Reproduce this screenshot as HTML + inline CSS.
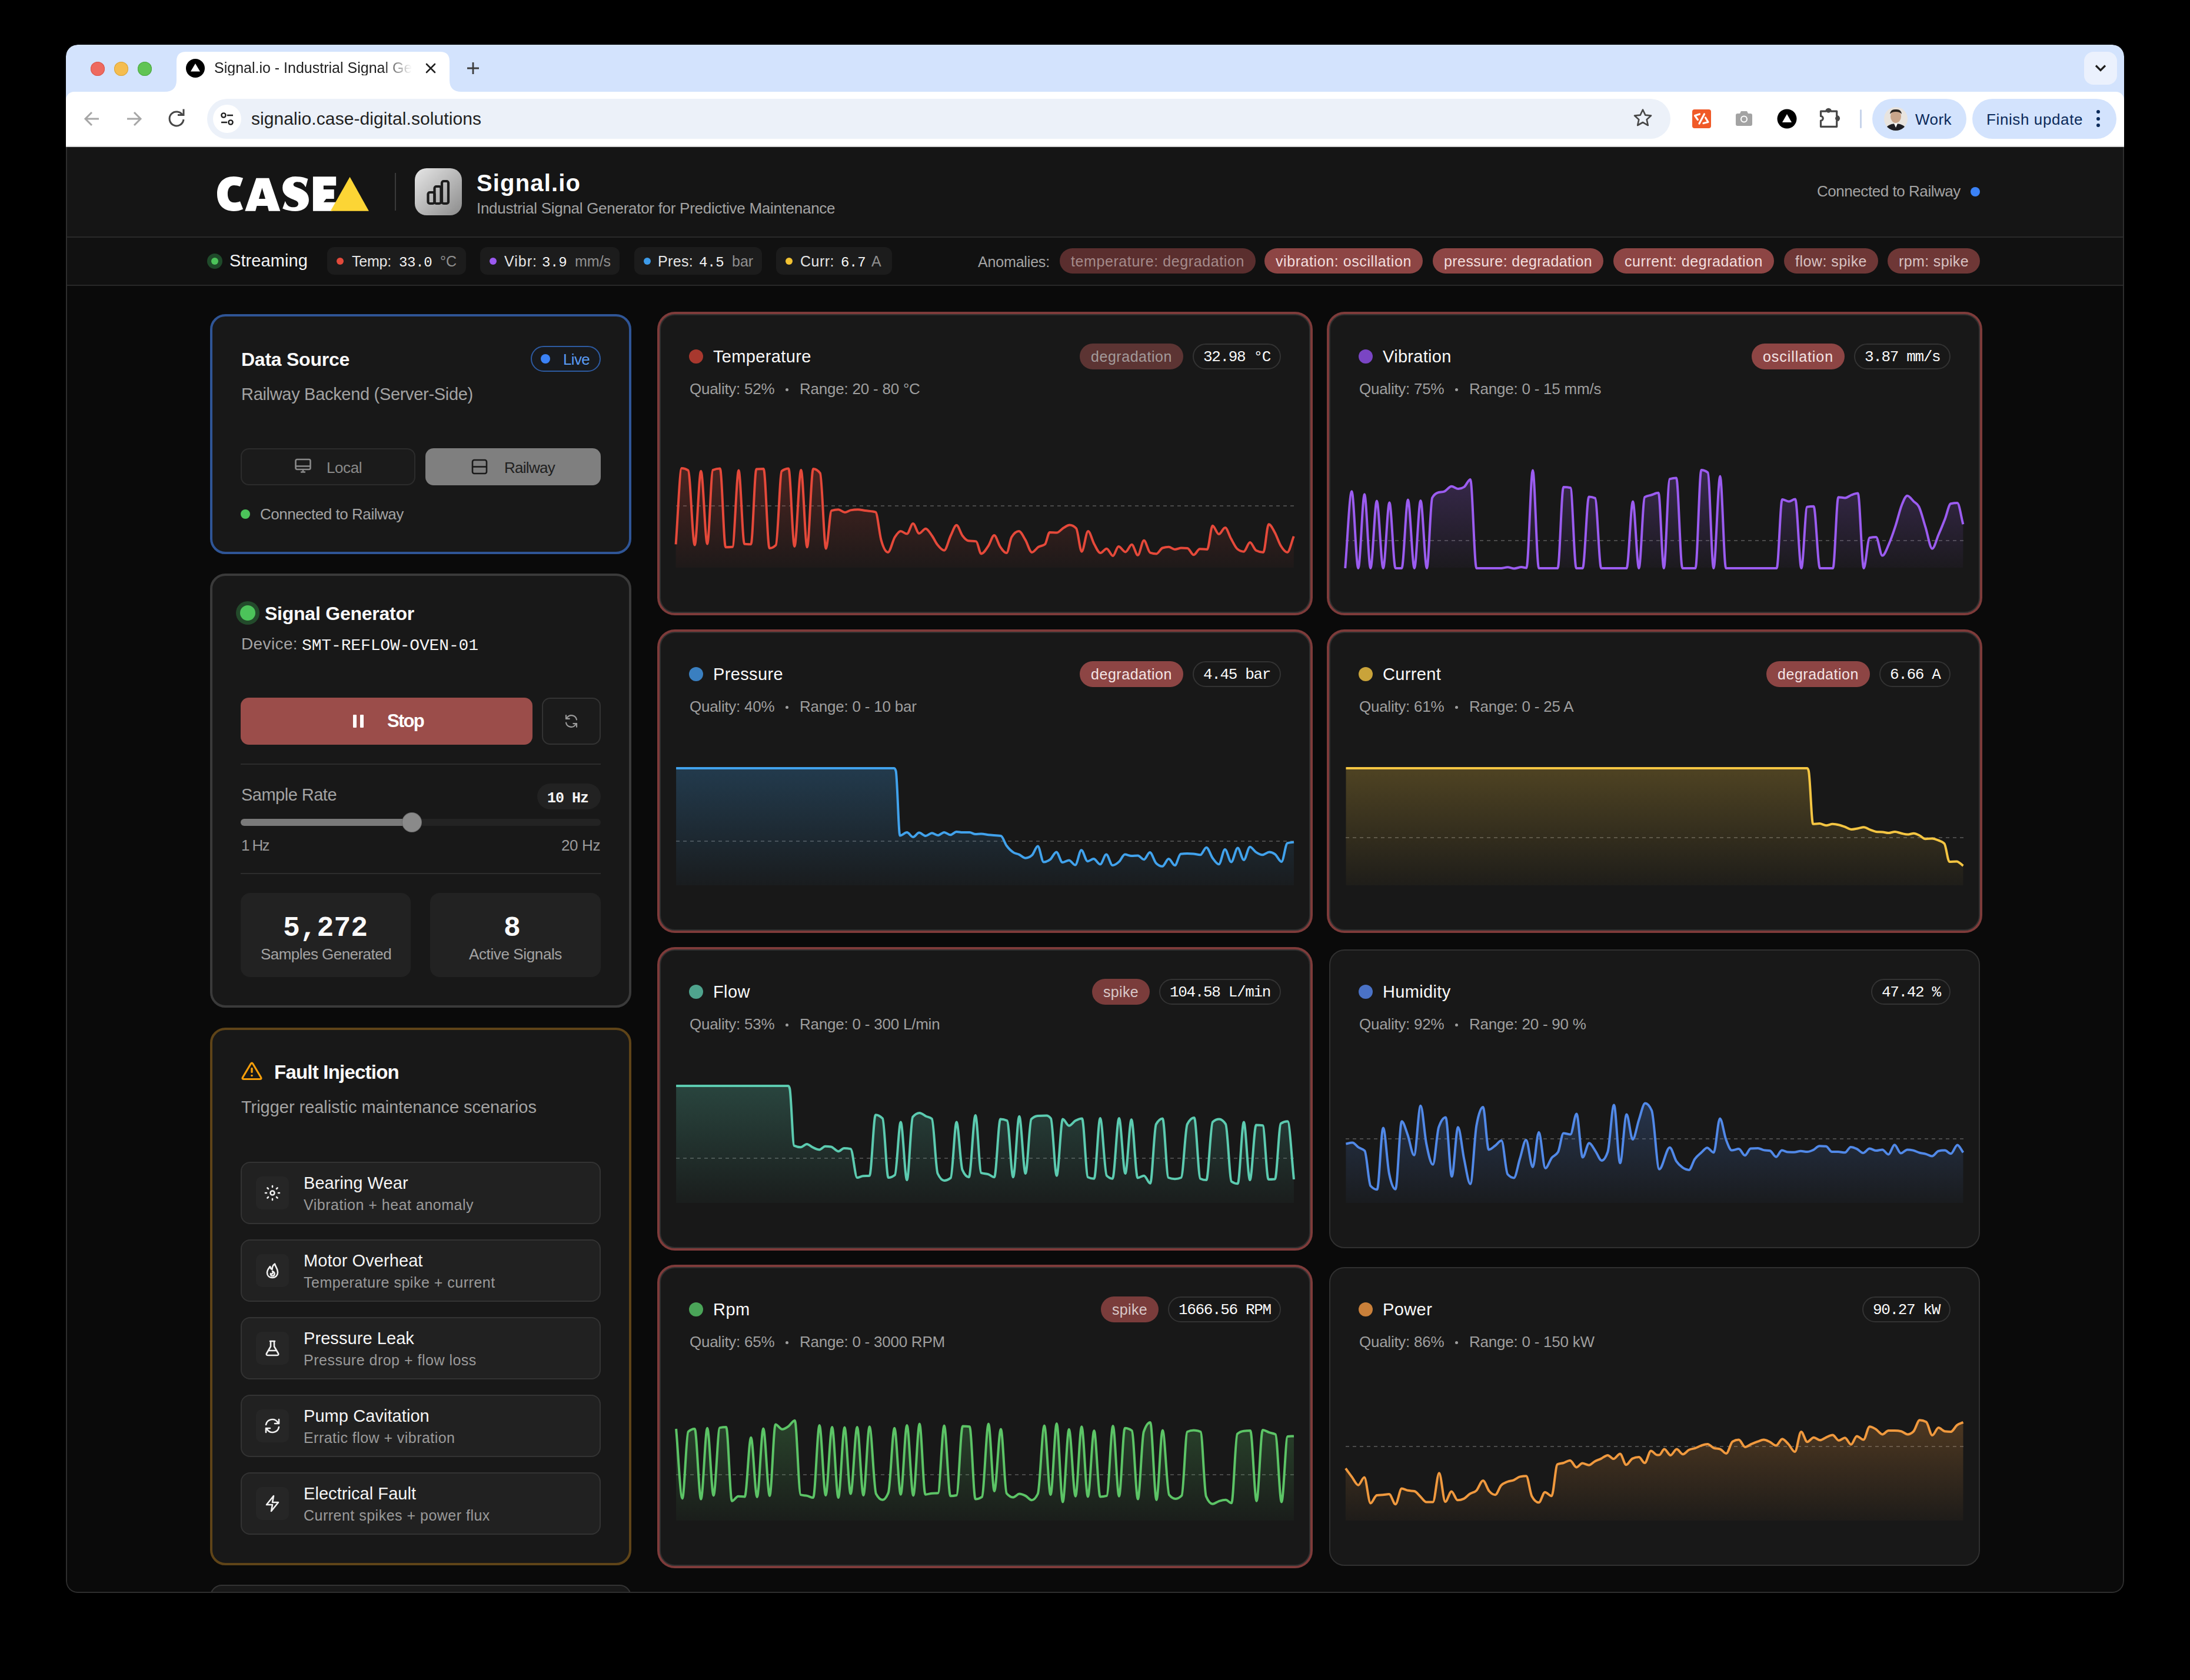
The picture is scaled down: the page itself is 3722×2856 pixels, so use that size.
<!DOCTYPE html><html><head><meta charset="utf-8"><style>html,body{margin:0;padding:0;background:#000;}body{width:3722px;height:2856px;position:relative;overflow:hidden;font-family:"Liberation Sans",sans-serif;}</style></head><body><div style='position:absolute;left:0;top:0;width:3722px;height:2856px;clip-path:inset(76px 112px 148px 112px round 20px)'><div style="position:absolute;left:112px;top:76px;width:3498px;height:2631px;border-radius:20px;overflow:hidden;background:#0a0a0a"></div>
<div style="position:absolute;left:112px;top:76px;width:3498px;height:174px;background:#d3e3fd;border-radius:20px 20px 0 0"></div>
<svg style="position:absolute;left:280px;top:88px" width="510" height="70"><path d="M0,68 Q20,68 20,48 L20,16 Q20,0 36,0 L468,0 Q484,0 484,16 L484,48 Q484,68 504,68 Z" fill="#fff"/></svg>
<div style="position:absolute;left:112px;top:156px;width:3498px;height:92px;background:#ffffff;border-radius:14px 14px 0 0"></div>
<div style="position:absolute;left:112px;top:248px;width:3498px;height:2px;background:#d9d9d9"></div>
<div style="position:absolute;left:154px;top:105px;width:24px;height:24px;border-radius:50%;background:#ee6a5f;box-shadow:inset 0 0 0 1px #d9574c"></div>
<div style="position:absolute;left:194px;top:105px;width:24px;height:24px;border-radius:50%;background:#f5bd4f;box-shadow:inset 0 0 0 1px #d9a53a"></div>
<div style="position:absolute;left:234px;top:105px;width:24px;height:24px;border-radius:50%;background:#61c454;box-shadow:inset 0 0 0 1px #4ea844"></div>
<svg style="position:absolute;left:316px;top:100px" width="32" height="32"><circle cx="16" cy="16" r="16" fill="#000"/><path d="M16,8 L24,21.5 L8,21.5 Z" fill="#fff"/></svg>
<div style="position:absolute;left:364.0px;top:102.8px;white-space:nowrap;font-family:'Liberation Sans', sans-serif;font-size:25px;line-height:25px;font-weight:400;color:#1f1f1f;letter-spacing:0.00px;-webkit-mask-image:linear-gradient(90deg,#000 85%,transparent);">Signal.io - Industrial Signal Ge</div>
<svg style="position:absolute;left:722px;top:106px" width="20" height="20"><path d="M3,3 L17,17 M17,3 L3,17" stroke="#1f1f1f" stroke-width="2.6" stroke-linecap="round"/></svg>
<svg style="position:absolute;left:792px;top:104px" width="24" height="24"><path d="M12,2 L12,22 M2,12 L22,12" stroke="#3c3c3c" stroke-width="2.8"/></svg>
<div style="position:absolute;left:3542px;top:88px;width:56px;height:56px;background:#ebf1fd;border-radius:16px"></div>
<svg style="position:absolute;left:3558px;top:106px" width="24" height="20"><path d="M4,5.5 L12,13.5 L20,5.5" stroke="#1f1f1f" stroke-width="3.2" fill="none"/></svg>
<svg style="position:absolute;left:136px;top:182px" width="40" height="40"><path d="M32,20 L9,20 M20,9 L9,20 L20,31" stroke="#a6a6a6" stroke-width="3" fill="none"/></svg>
<svg style="position:absolute;left:208px;top:182px" width="40" height="40"><path d="M8,20 L31,20 M20,9 L31,20 L20,31" stroke="#a6a6a6" stroke-width="3" fill="none"/></svg>
<svg style="position:absolute;left:280px;top:182px" width="40" height="40"><path d="M30.5,14 A12,12 0 1 0 32,21" stroke="#474747" stroke-width="3" fill="none"/><path d="M22,13.5 L32,13.5 L32,3.5" stroke="#474747" stroke-width="3" fill="none"/></svg>
<div style="position:absolute;left:352px;top:168px;width:2487px;height:68px;background:#ecf1f9;border-radius:34px"></div>
<div style="position:absolute;left:362px;top:178px;width:48px;height:48px;background:#fff;border-radius:50%"></div>
<svg style="position:absolute;left:370px;top:186px" width="32" height="32"><circle cx="10" cy="10" r="3.6" stroke="#1f1f1f" stroke-width="2.4" fill="none"/><path d="M16,10 L26,10" stroke="#1f1f1f" stroke-width="2.4"/><circle cx="22" cy="22" r="3.6" stroke="#1f1f1f" stroke-width="2.4" fill="none"/><path d="M6,22 L16,22" stroke="#1f1f1f" stroke-width="2.4"/></svg>
<div style="position:absolute;left:427.0px;top:187.1px;white-space:nowrap;font-family:'Liberation Sans', sans-serif;font-size:30px;line-height:30px;font-weight:400;color:#1f1f1f;letter-spacing:0.08px;">signalio.case-digital.solutions</div>
<svg style="position:absolute;left:2774px;top:183px" width="36" height="36"><path d="M18,3.5 L22.3,12.6 L32,13.6 L24.7,20.2 L26.8,30 L18,25 L9.2,30 L11.3,20.2 L4,13.6 L13.7,12.6 Z" stroke="#474747" stroke-width="2.6" fill="none" stroke-linejoin="round"/></svg>
<div style="position:absolute;left:2876px;top:186px;width:32px;height:32px;background:#f05a28;border-radius:4px"></div>
<svg style="position:absolute;left:2876px;top:186px" width="32" height="32"><g stroke="#fff" stroke-width="3.2" fill="none" stroke-linecap="round" stroke-linejoin="round"><path d="M12.5,8 L4.5,10.5 L9.4,17.5"/><path d="M20.5,8 L12,24"/><path d="M22.5,14 L27,21.5 L19,23.5"/></g></svg>
<svg style="position:absolute;left:2946px;top:184px" width="36" height="36"><path d="M4,12 Q4,9 7,9 L11,9 L13,5 L23,5 L25,9 L29,9 Q32,9 32,12 L32,27 Q32,30 29,30 L7,30 Q4,30 4,27 Z" fill="#a3a3a3"/><circle cx="18" cy="18.5" r="6" fill="#fff"/><circle cx="18" cy="18.5" r="4" fill="#a3a3a3"/></svg>
<svg style="position:absolute;left:3020px;top:185px" width="34" height="34"><circle cx="17" cy="17" r="16.5" fill="#000"/><path d="M17,9 L25,23 L9,23 Z" fill="#fff"/></svg>
<svg style="position:absolute;left:3088px;top:180px" width="42" height="42"><path d="M6.5,9.1 L15.8,9.1 A3.8,3.8 0 0 1 23.4,9.1 L33.7,9.1 L33.7,17.4 A3.8,3.8 0 0 1 33.7,25 L33.7,35.3 L6.5,35.3 L6.5,25 A3.8,3.8 0 0 0 6.5,17.4 Z" stroke="#474747" stroke-width="3.2" fill="none" stroke-linejoin="round"/><circle cx="19.6" cy="8.5" r="3.2" fill="#474747"/><circle cx="34.3" cy="21.2" r="3.2" fill="#474747"/></svg>
<div style="position:absolute;left:3161px;top:186px;width:3px;height:32px;background:#c7d3ea;border-radius:2px"></div>
<div style="position:absolute;left:3182px;top:168px;width:160px;height:68px;background:#d3e3fd;border-radius:34px"></div>
<svg style="position:absolute;left:3201px;top:181px" width="42" height="42"><defs><clipPath id="av"><circle cx="21" cy="21" r="20"/></clipPath></defs><g clip-path="url(#av)"><rect width="42" height="42" fill="#e8e4df"/><ellipse cx="21" cy="17" rx="9" ry="11" fill="#c9a58b"/><path d="M11,13 Q12,4 21,5 Q30,4 31,13 Q28,9 21,9 Q14,9 11,13 Z" fill="#2a2420"/><path d="M2,42 Q4,30 21,29 Q38,30 40,42 Z" fill="#1e1e24"/><path d="M18,29 L21,36 L24,29 Z" fill="#fff"/></g></svg>
<div style="position:absolute;left:3255.0px;top:190.0px;white-space:nowrap;font-family:'Liberation Sans', sans-serif;font-size:26px;line-height:26px;font-weight:400;color:#0b2a5a;letter-spacing:0.45px;">Work</div>
<div style="position:absolute;left:3352px;top:168px;width:245px;height:68px;background:#d3e3fd;border-radius:34px"></div>
<div style="position:absolute;left:3376.0px;top:190.0px;white-space:nowrap;font-family:'Liberation Sans', sans-serif;font-size:26px;line-height:26px;font-weight:400;color:#0b2a5a;letter-spacing:0.61px;">Finish update</div>
<div style="position:absolute;left:3563px;top:187px;width:6px;height:6px;background:#0b2a5a;border-radius:50%"></div>
<div style="position:absolute;left:3563px;top:198.5px;width:6px;height:6px;background:#0b2a5a;border-radius:50%"></div>
<div style="position:absolute;left:3563px;top:210px;width:6px;height:6px;background:#0b2a5a;border-radius:50%"></div>
<div style="position:absolute;left:112px;top:250px;width:3498px;height:152px;background:#151515"></div>
<div style="position:absolute;left:112px;top:402px;width:3498px;height:2px;background:#2a2a2a"></div>
<div style="position:absolute;left:112px;top:404px;width:3498px;height:80px;background:#111111"></div>
<div style="position:absolute;left:112px;top:484px;width:3498px;height:2px;background:#282828"></div>
<svg style="position:absolute;left:360px;top:290px" width="280" height="80" viewBox="0 0 2190 626"><g fill="#fff" fill-rule="evenodd"><path d="M415,100 C370,85 335,78 290,78 C150,78 70,170 70,310 C70,450 150,540 290,540 C335,540 375,530 415,512 L375,408 C350,418 325,425 295,425 C240,425 210,380 210,310 C210,240 240,195 295,195 C325,195 350,202 375,212 Z"/><path d="M440,537 L590,100 L760,100 L910,537 L757,537 L740,470 L598,470 L580,537 Z M668,228 L712,375 L625,375 Z"/><path d="M1278,110 C1220,88 1170,78 1110,78 C1005,78 940,140 940,228 C940,318 1005,352 1085,385 C1135,405 1150,418 1150,442 C1150,472 1122,488 1085,488 C1040,488 1000,475 975,405 L940,505 C990,528 1050,540 1110,540 C1220,540 1290,478 1290,390 C1290,300 1230,262 1150,230 C1100,210 1085,205 1085,185 C1085,165 1105,150 1140,150 C1180,150 1215,165 1248,222 Z"/><path d="M1345,80 L1652,80 L1652,200 L1485,200 L1485,250 L1625,250 L1625,375 L1520,375 L1485,420 L1660,420 L1600,537 L1345,537 Z"/></g><path d="M1835,85 L2088,537 L1578,537 Z" fill="#fcd535"/></svg>
<div style="position:absolute;left:671px;top:294px;width:2px;height:64px;background:#3a3a3a"></div>
<div style="position:absolute;left:705px;top:286px;width:80px;height:80px;background:linear-gradient(135deg,#e6e6e6,#8c8c8c);border-radius:20px"></div>
<svg style="position:absolute;left:705px;top:286px" width="80" height="80"><g fill="none" stroke="#1c1c1c" stroke-width="4.2" stroke-linejoin="round"><rect x="22.5" y="41" width="11" height="19" rx="3"/><rect x="33.5" y="31" width="11" height="29" rx="3"/><rect x="46" y="22" width="11" height="38" rx="3"/></g></svg>
<div style="position:absolute;left:810.0px;top:291.1px;white-space:nowrap;font-family:'Liberation Sans', sans-serif;font-size:40px;line-height:40px;font-weight:700;color:#ffffff;letter-spacing:1.15px;">Signal.io</div>
<div style="position:absolute;left:810.0px;top:341.0px;white-space:nowrap;font-family:'Liberation Sans', sans-serif;font-size:26px;line-height:26px;font-weight:400;color:#a3a3a3;letter-spacing:-0.28px;">Industrial Signal Generator for Predictive Maintenance</div>
<div style="position:absolute;left:3088.0px;top:312.0px;white-space:nowrap;font-family:'Liberation Sans', sans-serif;font-size:26px;line-height:26px;font-weight:400;color:#a3a3a3;letter-spacing:-0.45px;">Connected to Railway</div>
<div style="position:absolute;left:3349px;top:318px;width:16px;height:16px;background:#3b82f6;border-radius:50%"></div>
<div style="position:absolute;left:352px;top:431px;width:26px;height:26px;background:#1f4a2a;border-radius:50%"></div>
<div style="position:absolute;left:359px;top:438px;width:12px;height:12px;background:#4ade80;border-radius:50%;background:#4cc35a"></div>
<div style="position:absolute;left:390.0px;top:429.4px;white-space:nowrap;font-family:'Liberation Sans', sans-serif;font-size:29px;line-height:29px;font-weight:400;color:#f5f5f5;letter-spacing:0.09px;">Streaming</div>
<div style="position:absolute;left:556px;top:420px;width:236px;height:47px;background:#1c1c1c;border-radius:12px"></div>
<div style="position:absolute;left:572px;top:438px;width:12px;height:12px;background:#e24a3b;border-radius:50%"></div>
<div style="position:absolute;left:598.0px;top:431.8px;white-space:nowrap;font-family:'Liberation Sans', sans-serif;font-size:25px;line-height:25px;font-weight:400;color:#e5e5e5;letter-spacing:-0.22px;">Temp:</div>
<div style="position:absolute;left:678.0px;top:434.6px;white-space:nowrap;font-family:'Liberation Mono', monospace;font-size:24px;line-height:24px;font-weight:400;color:#f5f5f5;letter-spacing:-0.30px;">33.0</div>
<div style="position:absolute;left:748.0px;top:431.8px;white-space:nowrap;font-family:'Liberation Sans', sans-serif;font-size:25px;line-height:25px;font-weight:400;color:#8f8f8f;letter-spacing:0.00px;">°C</div>
<div style="position:absolute;left:816px;top:420px;width:237px;height:47px;background:#1c1c1c;border-radius:12px"></div>
<div style="position:absolute;left:832px;top:438px;width:12px;height:12px;background:#9b59f0;border-radius:50%"></div>
<div style="position:absolute;left:857.0px;top:431.8px;white-space:nowrap;font-family:'Liberation Sans', sans-serif;font-size:25px;line-height:25px;font-weight:400;color:#e5e5e5;letter-spacing:1.01px;">Vibr:</div>
<div style="position:absolute;left:921.0px;top:434.6px;white-space:nowrap;font-family:'Liberation Mono', monospace;font-size:24px;line-height:24px;font-weight:400;color:#f5f5f5;letter-spacing:-0.31px;">3.9</div>
<div style="position:absolute;left:977.0px;top:431.8px;white-space:nowrap;font-family:'Liberation Sans', sans-serif;font-size:25px;line-height:25px;font-weight:400;color:#8f8f8f;letter-spacing:0.00px;">mm/s</div>
<div style="position:absolute;left:1078px;top:420px;width:217px;height:47px;background:#1c1c1c;border-radius:12px"></div>
<div style="position:absolute;left:1094px;top:438px;width:12px;height:12px;background:#3d9be9;border-radius:50%"></div>
<div style="position:absolute;left:1118.0px;top:431.8px;white-space:nowrap;font-family:'Liberation Sans', sans-serif;font-size:25px;line-height:25px;font-weight:400;color:#e5e5e5;letter-spacing:0.33px;">Pres:</div>
<div style="position:absolute;left:1188.0px;top:434.6px;white-space:nowrap;font-family:'Liberation Mono', monospace;font-size:24px;line-height:24px;font-weight:400;color:#f5f5f5;letter-spacing:-0.31px;">4.5</div>
<div style="position:absolute;left:1244.0px;top:431.8px;white-space:nowrap;font-family:'Liberation Sans', sans-serif;font-size:25px;line-height:25px;font-weight:400;color:#8f8f8f;letter-spacing:0.00px;">bar</div>
<div style="position:absolute;left:1319px;top:420px;width:197px;height:47px;background:#1c1c1c;border-radius:12px"></div>
<div style="position:absolute;left:1335px;top:438px;width:12px;height:12px;background:#f2c232;border-radius:50%"></div>
<div style="position:absolute;left:1360.0px;top:431.8px;white-space:nowrap;font-family:'Liberation Sans', sans-serif;font-size:25px;line-height:25px;font-weight:400;color:#e5e5e5;letter-spacing:0.49px;">Curr:</div>
<div style="position:absolute;left:1429.0px;top:434.6px;white-space:nowrap;font-family:'Liberation Mono', monospace;font-size:24px;line-height:24px;font-weight:400;color:#f5f5f5;letter-spacing:-0.31px;">6.7</div>
<div style="position:absolute;left:1481.0px;top:431.8px;white-space:nowrap;font-family:'Liberation Sans', sans-serif;font-size:25px;line-height:25px;font-weight:400;color:#8f8f8f;letter-spacing:0.00px;">A</div>
<div style="position:absolute;left:1662.0px;top:432.8px;white-space:nowrap;font-family:'Liberation Sans', sans-serif;font-size:25px;line-height:25px;font-weight:400;color:#a3a3a3;letter-spacing:-0.17px;">Anomalies:</div>
<div style="position:absolute;left:1801px;top:422px;width:333px;height:43px;background:#5a2e2e;border-radius:22px"></div>
<div style="position:absolute;left:1820.0px;top:431.8px;white-space:nowrap;font-family:'Liberation Sans', sans-serif;font-size:25px;line-height:25px;font-weight:400;color:#a48a8a;letter-spacing:0.59px;">temperature: degradation</div>
<div style="position:absolute;left:2149px;top:422px;width:269px;height:43px;background:#8d4544;border-radius:22px"></div>
<div style="position:absolute;left:2168.0px;top:431.8px;white-space:nowrap;font-family:'Liberation Sans', sans-serif;font-size:25px;line-height:25px;font-weight:400;color:#f3dede;letter-spacing:0.58px;">vibration: oscillation</div>
<div style="position:absolute;left:2435px;top:422px;width:290px;height:43px;background:#8d4544;border-radius:22px"></div>
<div style="position:absolute;left:2454.0px;top:431.8px;white-space:nowrap;font-family:'Liberation Sans', sans-serif;font-size:25px;line-height:25px;font-weight:400;color:#f3dede;letter-spacing:0.42px;">pressure: degradation</div>
<div style="position:absolute;left:2742px;top:422px;width:273px;height:43px;background:#8d4544;border-radius:22px"></div>
<div style="position:absolute;left:2761.0px;top:431.8px;white-space:nowrap;font-family:'Liberation Sans', sans-serif;font-size:25px;line-height:25px;font-weight:400;color:#f3dede;letter-spacing:0.56px;">current: degradation</div>
<div style="position:absolute;left:3032px;top:422px;width:160px;height:43px;background:#6e3736;border-radius:22px"></div>
<div style="position:absolute;left:3051.0px;top:431.8px;white-space:nowrap;font-family:'Liberation Sans', sans-serif;font-size:25px;line-height:25px;font-weight:400;color:#d8c2c2;letter-spacing:0.48px;">flow: spike</div>
<div style="position:absolute;left:3208px;top:422px;width:157px;height:43px;background:#6e3736;border-radius:22px"></div>
<div style="position:absolute;left:3227.0px;top:431.8px;white-space:nowrap;font-family:'Liberation Sans', sans-serif;font-size:25px;line-height:25px;font-weight:400;color:#d8c2c2;letter-spacing:0.37px;">rpm: spike</div>
<div style="position:absolute;left:357px;top:534px;width:716px;height:408px;background:#181818;border:4px solid #2f5596;border-radius:26px;box-sizing:border-box"></div>
<div style="position:absolute;left:410.0px;top:594.9px;white-space:nowrap;font-family:'Liberation Sans', sans-serif;font-size:32px;line-height:32px;font-weight:700;color:#fafafa;letter-spacing:-0.25px;">Data Source</div>
<div style="position:absolute;left:902px;top:588px;width:119px;height:44px;border:2px solid #2d5aa0;border-radius:22px;box-sizing:border-box;background:#181a1d"></div>
<div style="position:absolute;left:919px;top:602px;width:16px;height:16px;background:#3b82f6;border-radius:50%"></div>
<div style="position:absolute;left:957.0px;top:598.0px;white-space:nowrap;font-family:'Liberation Sans', sans-serif;font-size:26px;line-height:26px;font-weight:400;color:#5b9cf5;letter-spacing:-0.68px;">Live</div>
<div style="position:absolute;left:410.0px;top:656.4px;white-space:nowrap;font-family:'Liberation Sans', sans-serif;font-size:29px;line-height:29px;font-weight:400;color:#a3a3a3;letter-spacing:-0.31px;">Railway Backend (Server-Side)</div>
<div style="position:absolute;left:409px;top:762px;width:297px;height:63px;background:#1b1b1b;border:2px solid #2c2c2c;border-radius:14px;box-sizing:border-box"></div>
<svg style="position:absolute;left:500px;top:778px" width="30" height="30"><g fill="none" stroke="#8a8a8a" stroke-width="2.6" stroke-linejoin="round"><rect x="2.5" y="3" width="25" height="17" rx="2.5"/><path d="M2.5,14.5 L27.5,14.5 M11,24.5 L19,24.5 M15,20 L15,24.5"/></g></svg>
<div style="position:absolute;left:555.0px;top:781.5px;white-space:nowrap;font-family:'Liberation Sans', sans-serif;font-size:26px;line-height:26px;font-weight:400;color:#8a8a8a;letter-spacing:-0.43px;">Local</div>
<div style="position:absolute;left:723px;top:762px;width:298px;height:63px;background:#7f7f7f;border-radius:14px"></div>
<svg style="position:absolute;left:800px;top:779px" width="30" height="30"><g fill="none" stroke="#1a1a1a" stroke-width="2.6" stroke-linejoin="round"><rect x="3" y="3" width="24" height="23" rx="3"/><path d="M3,14.5 L27,14.5"/></g></svg>
<div style="position:absolute;left:857.0px;top:781.5px;white-space:nowrap;font-family:'Liberation Sans', sans-serif;font-size:26px;line-height:26px;font-weight:400;color:#202020;letter-spacing:-0.72px;">Railway</div>
<div style="position:absolute;left:409px;top:866px;width:16px;height:16px;background:#4cc35a;border-radius:50%"></div>
<div style="position:absolute;left:442.0px;top:861.0px;white-space:nowrap;font-family:'Liberation Sans', sans-serif;font-size:26px;line-height:26px;font-weight:400;color:#a3a3a3;letter-spacing:-0.45px;">Connected to Railway</div>
<div style="position:absolute;left:357px;top:975px;width:716px;height:738px;background:#181818;border:4px solid #3a3a3a;border-radius:26px;box-sizing:border-box"></div>
<div style="position:absolute;left:401px;top:1022px;width:40px;height:40px;background:#234a2b;border-radius:50%"></div>
<div style="position:absolute;left:408px;top:1029px;width:26px;height:26px;background:#4cc35a;border-radius:50%"></div>
<div style="position:absolute;left:450.0px;top:1026.9px;white-space:nowrap;font-family:'Liberation Sans', sans-serif;font-size:32px;line-height:32px;font-weight:700;color:#fafafa;letter-spacing:-0.24px;">Signal Generator</div>
<div style="position:absolute;left:410.0px;top:1081.3px;white-space:nowrap;font-family:'Liberation Sans', sans-serif;font-size:28px;line-height:28px;font-weight:400;color:#a3a3a3;letter-spacing:0.38px;">Device:</div>
<div style="position:absolute;left:513.0px;top:1083.5px;white-space:nowrap;font-family:'Liberation Mono', monospace;font-size:28px;line-height:28px;font-weight:400;color:#f5f5f5;letter-spacing:-0.14px;">SMT-REFLOW-OVEN-01</div>
<div style="position:absolute;left:409px;top:1186px;width:496px;height:80px;background:#9b4d4a;border-radius:14px"></div>
<div style="position:absolute;left:600px;top:1215px;width:6px;height:22px;background:#fff;border-radius:1px"></div>
<div style="position:absolute;left:612px;top:1215px;width:6px;height:22px;background:#fff;border-radius:1px"></div>
<div style="position:absolute;left:658.0px;top:1209.8px;white-space:nowrap;font-family:'Liberation Sans', sans-serif;font-size:31px;line-height:31px;font-weight:700;color:#ffffff;letter-spacing:-1.72px;">Stop</div>
<div style="position:absolute;left:921px;top:1186px;width:100px;height:80px;border:2px solid #333;border-radius:14px;box-sizing:border-box;background:#1b1b1b"></div>
<svg style="position:absolute;left:955px;top:1210px;transform:scale(-0.82,0.82);transform-origin:16px 16px" width="32" height="32"><g fill="none" stroke="#9a9a9a" stroke-width="2.6" stroke-linecap="round" stroke-linejoin="round"><path d="M5,13 A11,11 0 0 1 25,9 L27,11"/><path d="M27,4 L27,11 L20,11"/><path d="M27,19 A11,11 0 0 1 7,23 L5,21"/><path d="M5,28 L5,21 L12,21"/></g></svg>
<div style="position:absolute;left:409px;top:1298px;width:612px;height:2px;background:#2c2c2c"></div>
<div style="position:absolute;left:410.0px;top:1337.4px;white-space:nowrap;font-family:'Liberation Sans', sans-serif;font-size:29px;line-height:29px;font-weight:400;color:#a3a3a3;letter-spacing:-0.51px;">Sample Rate</div>
<div style="position:absolute;left:913px;top:1332px;width:108px;height:44px;background:#222222;border-radius:22px"></div>
<div style="position:absolute;left:930.0px;top:1344.8px;white-space:nowrap;font-family:'Liberation Mono', monospace;font-size:25px;line-height:25px;font-weight:700;color:#f5f5f5;letter-spacing:-1.00px;">10 Hz</div>
<div style="position:absolute;left:409px;top:1392px;width:612px;height:12px;background:#232323;border-radius:6px"></div>
<div style="position:absolute;left:409px;top:1392px;width:291px;height:12px;background:#7a7a7a;border-radius:6px"></div>
<div style="position:absolute;left:684px;top:1382px;width:32px;height:32px;background:#8a8a8a;border-radius:50%;box-shadow:0 0 0 1px #6a6a6a"></div>
<div style="position:absolute;left:410.0px;top:1424.0px;white-space:nowrap;font-family:'Liberation Sans', sans-serif;font-size:26px;line-height:26px;font-weight:400;color:#9a9a9a;letter-spacing:-1.62px;">1 Hz</div>
<div style="position:absolute;left:954.0px;top:1424.0px;white-space:nowrap;font-family:'Liberation Sans', sans-serif;font-size:26px;line-height:26px;font-weight:400;color:#9a9a9a;letter-spacing:-0.38px;">20 Hz</div>
<div style="position:absolute;left:409px;top:1484px;width:612px;height:2px;background:#2c2c2c"></div>
<div style="position:absolute;left:409px;top:1518px;width:289px;height:143px;background:#222222;border-radius:16px"></div>
<div style="position:absolute;left:731px;top:1518px;width:290px;height:143px;background:#222222;border-radius:16px"></div>
<div style="position:absolute;left:481.0px;top:1554.2px;white-space:nowrap;font-family:'Liberation Mono', monospace;font-size:48px;line-height:48px;font-weight:700;color:#fafafa;letter-spacing:-0.01px;">5,272</div>
<div style="position:absolute;left:856.0px;top:1554.2px;white-space:nowrap;font-family:'Liberation Mono', monospace;font-size:48px;line-height:48px;font-weight:700;color:#fafafa;letter-spacing:-1.81px;">8</div>
<div style="position:absolute;left:443.0px;top:1609.0px;white-space:nowrap;font-family:'Liberation Sans', sans-serif;font-size:26px;line-height:26px;font-weight:400;color:#a3a3a3;letter-spacing:-0.54px;">Samples Generated</div>
<div style="position:absolute;left:797.0px;top:1609.0px;white-space:nowrap;font-family:'Liberation Sans', sans-serif;font-size:26px;line-height:26px;font-weight:400;color:#a3a3a3;letter-spacing:-0.38px;">Active Signals</div>
<div style="position:absolute;left:357px;top:1747px;width:716px;height:914px;background:#181818;border:4px solid #5f4418;border-radius:26px;box-sizing:border-box"></div>
<svg style="position:absolute;left:410px;top:1804px" width="38" height="34"><path d="M16.2,4.5 Q18,1.6 19.8,4.5 L33.5,27.5 Q35,30.5 31.5,30.5 L4.5,30.5 Q1,30.5 2.5,27.5 Z" fill="none" stroke="#f59e0b" stroke-width="3.2" stroke-linejoin="round"/><path d="M18,12.5 L18,18.5" stroke="#f59e0b" stroke-width="3.4" stroke-linecap="round"/><circle cx="18" cy="24.5" r="1.8" fill="#f59e0b"/></svg>
<div style="position:absolute;left:466.0px;top:1806.1px;white-space:nowrap;font-family:'Liberation Sans', sans-serif;font-size:33px;line-height:33px;font-weight:700;color:#fafafa;letter-spacing:-0.78px;">Fault Injection</div>
<div style="position:absolute;left:410.0px;top:1867.9px;white-space:nowrap;font-family:'Liberation Sans', sans-serif;font-size:29px;line-height:29px;font-weight:400;color:#a3a3a3;letter-spacing:-0.04px;">Trigger realistic maintenance scenarios</div>
<div style="position:absolute;left:409px;top:1975px;width:612px;height:106px;background:#212121;border:2px solid #333;border-radius:16px;box-sizing:border-box"></div>
<div style="position:absolute;left:435px;top:2000px;width:56px;height:56px;background:#262626;border-radius:10px"></div>
<svg style="position:absolute;left:447px;top:2012px" width="32" height="32"><g fill="none" stroke="#f0f0f0" stroke-width="2.6" stroke-linecap="round" stroke-linejoin="round"><circle cx="16" cy="16" r="3.5"/><path d="M16,4 L16,6 M16,26 L16,28 M4,16 L6,16 M26,16 L28,16 M7.5,7.5 L9,9 M23,23 L24.5,24.5 M7.5,24.5 L9,23 M23,9 L24.5,7.5"/></g></svg>
<div style="position:absolute;left:516.0px;top:1997.4px;white-space:nowrap;font-family:'Liberation Sans', sans-serif;font-size:29px;line-height:29px;font-weight:400;color:#f5f5f5;letter-spacing:0.07px;">Bearing Wear</div>
<div style="position:absolute;left:516.0px;top:2035.8px;white-space:nowrap;font-family:'Liberation Sans', sans-serif;font-size:25px;line-height:25px;font-weight:400;color:#9a9a9a;letter-spacing:0.51px;">Vibration + heat anomaly</div>
<div style="position:absolute;left:409px;top:2107px;width:612px;height:106px;background:#212121;border:2px solid #333;border-radius:16px;box-sizing:border-box"></div>
<div style="position:absolute;left:435px;top:2132px;width:56px;height:56px;background:#262626;border-radius:10px"></div>
<svg style="position:absolute;left:447px;top:2144px" width="32" height="32"><g fill="none" stroke="#f0f0f0" stroke-width="2.6" stroke-linecap="round" stroke-linejoin="round"><path d="M16,28 C10,28 7,24 7,19.5 C7,15 10,12 12,9 C12.5,12 14,13.5 15.5,14 C15.5,9.5 18,6 20,4.5 C20.5,9 25,12 25,19 C25,24 21.5,28 16,28 Z"/><path d="M16,25 C13.5,25 12.5,23 13,21 C14,22 15.5,22 16.5,20.5 C17,19 16.5,17.5 16,17 C19,18 20,20.5 19.5,22.5 C19,24 17.5,25 16,25 Z"/></g></svg>
<div style="position:absolute;left:516.0px;top:2129.4px;white-space:nowrap;font-family:'Liberation Sans', sans-serif;font-size:29px;line-height:29px;font-weight:400;color:#f5f5f5;letter-spacing:0.07px;">Motor Overheat</div>
<div style="position:absolute;left:516.0px;top:2167.8px;white-space:nowrap;font-family:'Liberation Sans', sans-serif;font-size:25px;line-height:25px;font-weight:400;color:#9a9a9a;letter-spacing:0.51px;">Temperature spike + current</div>
<div style="position:absolute;left:409px;top:2239px;width:612px;height:106px;background:#212121;border:2px solid #333;border-radius:16px;box-sizing:border-box"></div>
<div style="position:absolute;left:435px;top:2264px;width:56px;height:56px;background:#262626;border-radius:10px"></div>
<svg style="position:absolute;left:447px;top:2276px" width="32" height="32"><g fill="none" stroke="#f0f0f0" stroke-width="2.6" stroke-linecap="round" stroke-linejoin="round"><path d="M12,4 L20,4 M13,4 L13,13 L6,25 Q5,28 8.5,28 L23.5,28 Q27,28 26,25 L19,13 L19,4 M9,20 L23,20"/></g></svg>
<div style="position:absolute;left:516.0px;top:2261.4px;white-space:nowrap;font-family:'Liberation Sans', sans-serif;font-size:29px;line-height:29px;font-weight:400;color:#f5f5f5;letter-spacing:0.07px;">Pressure Leak</div>
<div style="position:absolute;left:516.0px;top:2299.8px;white-space:nowrap;font-family:'Liberation Sans', sans-serif;font-size:25px;line-height:25px;font-weight:400;color:#9a9a9a;letter-spacing:0.50px;">Pressure drop + flow loss</div>
<div style="position:absolute;left:409px;top:2371px;width:612px;height:106px;background:#212121;border:2px solid #333;border-radius:16px;box-sizing:border-box"></div>
<div style="position:absolute;left:435px;top:2396px;width:56px;height:56px;background:#262626;border-radius:10px"></div>
<svg style="position:absolute;left:447px;top:2408px" width="32" height="32"><g fill="none" stroke="#f0f0f0" stroke-width="2.6" stroke-linecap="round" stroke-linejoin="round"><path d="M5,14 A11,11 0 0 1 25,10 L27,12 M27,5 L27,12 L20,12 M27,18 A11,11 0 0 1 7,22 L5,20 M5,27 L5,20 L12,20"/></g></svg>
<div style="position:absolute;left:516.0px;top:2393.4px;white-space:nowrap;font-family:'Liberation Sans', sans-serif;font-size:29px;line-height:29px;font-weight:400;color:#f5f5f5;letter-spacing:0.07px;">Pump Cavitation</div>
<div style="position:absolute;left:516.0px;top:2431.8px;white-space:nowrap;font-family:'Liberation Sans', sans-serif;font-size:25px;line-height:25px;font-weight:400;color:#9a9a9a;letter-spacing:0.45px;">Erratic flow + vibration</div>
<div style="position:absolute;left:409px;top:2503px;width:612px;height:106px;background:#212121;border:2px solid #333;border-radius:16px;box-sizing:border-box"></div>
<div style="position:absolute;left:435px;top:2528px;width:56px;height:56px;background:#262626;border-radius:10px"></div>
<svg style="position:absolute;left:447px;top:2540px" width="32" height="32"><g fill="none" stroke="#f0f0f0" stroke-width="2.6" stroke-linecap="round" stroke-linejoin="round"><path d="M18,3 L6,18 L16,18 L14,29 L26,14 L16,14 Z"/></g></svg>
<div style="position:absolute;left:516.0px;top:2525.4px;white-space:nowrap;font-family:'Liberation Sans', sans-serif;font-size:29px;line-height:29px;font-weight:400;color:#f5f5f5;letter-spacing:0.06px;">Electrical Fault</div>
<div style="position:absolute;left:516.0px;top:2563.8px;white-space:nowrap;font-family:'Liberation Sans', sans-serif;font-size:25px;line-height:25px;font-weight:400;color:#9a9a9a;letter-spacing:0.49px;">Current spikes + power flux</div>
<div style="position:absolute;left:357px;top:2694px;width:716px;height:40px;background:#181818;border:2px solid #333;border-radius:26px;box-sizing:border-box"></div>
<div style="position:absolute;left:1117px;top:530px;width:1114px;height:516px;background:#7e3b3a;border-radius:30px"></div>
<div style="position:absolute;left:1121px;top:534px;width:1106px;height:508px;background:#181818;border:2px solid #303030;border-radius:26px;box-sizing:border-box"></div>
<div style="position:absolute;left:1171px;top:594px;width:24px;height:24px;background:#a8382e;border-radius:50%"></div>
<div style="position:absolute;left:1212.0px;top:592.4px;white-space:nowrap;font-family:'Liberation Sans', sans-serif;font-size:29px;line-height:29px;font-weight:400;color:#fafafa;letter-spacing:0.36px;">Temperature</div>
<div style="position:absolute;left:2027px;top:584px;width:150px;height:44px;border:2px solid #333;border-radius:22px;box-sizing:border-box"></div>
<div style="position:absolute;left:2045.0px;top:594.1px;white-space:nowrap;font-family:'Liberation Mono', monospace;font-size:26px;line-height:26px;font-weight:400;color:#fafafa;letter-spacing:-1.35px;">32.98 °C</div>
<div style="position:absolute;left:1835px;top:584px;width:176px;height:44px;background:#5c3433;border-radius:22px"></div>
<div style="position:absolute;left:1854.0px;top:593.8px;white-space:nowrap;font-family:'Liberation Sans', sans-serif;font-size:25px;line-height:25px;font-weight:400;color:#a39a9a;letter-spacing:0.54px;">degradation</div>
<div style="position:absolute;left:1172.0px;top:648.0px;white-space:nowrap;font-family:'Liberation Sans', sans-serif;font-size:26px;line-height:26px;font-weight:400;color:#9e9e9e;letter-spacing:-0.26px;">Quality: 52%</div>
<div style="position:absolute;left:1335px;top:660px;width:5px;height:5px;background:#9e9e9e;border-radius:50%"></div>
<div style="position:absolute;left:1359.0px;top:648.0px;white-space:nowrap;font-family:'Liberation Sans', sans-serif;font-size:26px;line-height:26px;font-weight:400;color:#9e9e9e;letter-spacing:-0.22px;">Range: 20 - 80 °C</div>
<svg style="position:absolute;left:0;top:0;overflow:visible" width="1" height="1"><defs><linearGradient id="g0" x1="0" y1="795.9" x2="0" y2="965" gradientUnits="userSpaceOnUse"><stop offset="0" stop-color="#e5493a" stop-opacity="0.25"/><stop offset="1" stop-color="#e5493a" stop-opacity="0.03"/></linearGradient></defs><path d="M1149,860 L2199,860" stroke="#4a4a4a" stroke-width="2.2" stroke-dasharray="6 6"/><path d="M1148.6,925.3C1151.9,882.2 1155.2,795.9 1158.5,795.9C1162.2,795.9 1165.9,797.1 1169.6,799.6C1173.3,802.1 1177.0,926.6 1180.7,926.6C1184.2,926.6 1187.8,800.8 1191.3,800.8C1194.9,800.8 1198.5,924.8 1202.1,924.8C1205.2,924.8 1208.4,800.4 1211.5,799.1C1215.6,797.4 1219.7,796.6 1223.8,796.6C1226.9,796.6 1230.1,930.3 1233.2,930.3C1237.1,930.3 1240.9,930.1 1244.8,929.8C1248.3,929.5 1251.9,799.6 1255.4,799.6C1258.7,799.6 1261.9,924.5 1265.2,924.8C1268.9,925.1 1272.6,925.3 1276.3,925.3C1279.4,925.3 1282.4,797.8 1285.5,797.6C1289.6,797.3 1293.7,797.1 1297.8,797.1C1301.1,797.1 1304.4,932.0 1307.7,932.0C1311.4,932.0 1315.0,930.2 1318.7,926.6C1322.0,923.4 1325.3,803.2 1328.6,800.8C1332.5,798.0 1336.3,796.6 1340.2,796.6C1343.6,796.6 1346.9,929.0 1350.3,929.0C1354.0,929.0 1357.7,799.1 1361.4,799.1C1364.9,799.1 1368.3,930.3 1371.8,930.3C1375.2,930.3 1378.7,797.1 1382.1,797.1C1386.0,797.1 1390.0,799.6 1393.9,804.5C1397.2,808.6 1400.5,932.7 1403.8,932.7C1406.9,932.7 1410.1,869.1 1413.2,868.1C1417.1,866.8 1420.9,866.2 1424.8,866.2C1428.5,866.2 1432.2,871.1 1435.9,871.1C1439.2,871.1 1442.4,868.0 1445.7,867.4C1449.8,866.6 1453.9,866.2 1458.0,866.2C1462.1,866.2 1466.3,867.5 1470.4,868.1C1476.3,869.0 1482.2,868.9 1488.1,870.6C1491.2,871.5 1494.4,906.7 1497.5,917.9C1501.4,931.8 1505.2,938.9 1509.1,938.9C1513.0,938.9 1517.0,919.1 1520.9,913.0C1524.2,907.9 1527.5,903.1 1530.8,903.1C1534.3,903.1 1537.9,907.6 1541.4,907.6C1544.8,907.6 1548.3,890.1 1551.7,890.1C1555.2,890.1 1558.6,906.8 1562.1,906.8C1565.8,906.8 1569.5,898.7 1573.2,898.7C1576.7,898.7 1580.3,905.6 1583.8,910.5C1587.1,915.0 1590.3,922.5 1593.6,926.6C1597.3,931.3 1601.0,935.7 1604.7,935.7C1608.4,935.7 1612.1,918.0 1615.8,910.5C1619.1,903.8 1622.4,892.8 1625.7,892.8C1629.0,892.8 1632.3,906.1 1635.6,910.5C1638.9,914.9 1642.1,918.6 1645.4,919.2C1649.9,920.0 1654.5,919.6 1659.0,920.4C1661.9,920.9 1664.7,941.4 1667.6,941.4C1671.7,941.4 1675.8,934.0 1679.9,927.8C1683.2,922.9 1686.4,910.0 1689.7,910.0C1693.0,910.0 1696.3,924.1 1699.6,929.0C1703.3,934.5 1707.0,940.1 1710.7,940.1C1713.6,940.1 1716.4,917.6 1719.3,913.0C1723.4,906.4 1727.5,903.1 1731.6,903.1C1735.3,903.1 1739.0,911.9 1742.7,917.9C1746.4,923.9 1750.1,938.9 1753.8,938.9C1757.5,938.9 1761.2,932.1 1764.9,929.8C1768.6,927.5 1772.3,928.3 1776.0,925.3C1778.6,923.2 1781.3,905.1 1783.9,905.1C1787.8,905.1 1791.8,905.6 1795.7,905.6C1799.8,905.6 1804.0,899.3 1808.1,897.0C1811.4,895.2 1814.6,892.5 1817.9,892.5C1821.6,892.5 1825.3,894.4 1829.0,898.2C1832.1,901.4 1835.3,937.7 1838.4,937.7C1842.0,937.7 1845.6,903.1 1849.2,903.1C1852.7,903.1 1856.3,919.1 1859.8,925.3C1863.3,931.4 1866.7,940.1 1870.2,940.1C1873.7,940.1 1877.3,932.7 1880.8,932.7C1884.3,932.7 1887.9,945.0 1891.4,945.0C1894.6,945.0 1897.8,929.0 1901.0,929.0C1905.0,929.0 1908.9,938.4 1912.9,938.4C1916.4,938.4 1920.0,925.8 1923.5,925.8C1926.9,925.8 1930.4,943.8 1933.8,943.8C1937.3,943.8 1940.7,918.7 1944.2,918.7C1947.7,918.7 1951.3,938.4 1954.8,939.6C1958.3,940.8 1961.9,941.4 1965.4,941.4C1968.8,941.4 1972.3,932.6 1975.7,931.5C1979.2,930.4 1982.8,929.8 1986.3,929.8C1989.8,929.8 1993.2,934.0 1996.7,934.0C2000.4,934.0 2004.1,931.5 2007.8,931.5C2011.2,931.5 2014.7,931.7 2018.1,932.0C2021.6,932.3 2025.2,943.3 2028.7,943.3C2032.2,943.3 2035.6,933.2 2039.1,933.2C2043.3,933.2 2047.5,934.0 2051.7,934.0C2054.7,934.0 2057.8,893.8 2060.8,893.8C2064.3,893.8 2067.9,908.1 2071.4,908.1C2075.0,908.1 2078.6,897.0 2082.2,897.0C2085.5,897.0 2088.8,909.7 2092.1,915.5C2095.8,922.0 2099.5,930.6 2103.2,933.5C2106.7,936.3 2110.3,937.7 2113.8,937.7C2117.3,937.7 2120.9,922.1 2124.4,922.1C2127.8,922.1 2131.3,933.9 2134.7,935.7C2138.8,937.8 2143.0,938.9 2147.1,938.9C2150.1,938.9 2153.2,891.3 2156.2,891.3C2159.7,891.3 2163.3,899.2 2166.8,905.6C2170.1,911.6 2173.4,922.3 2176.7,927.8C2180.4,933.9 2184.1,938.9 2187.8,938.9C2191.5,938.9 2195.1,920.8 2198.8,911.8L2198.8,965L1148.6,965Z" fill="url(#g0)"/><path d="M1148.6,925.3C1151.9,882.2 1155.2,795.9 1158.5,795.9C1162.2,795.9 1165.9,797.1 1169.6,799.6C1173.3,802.1 1177.0,926.6 1180.7,926.6C1184.2,926.6 1187.8,800.8 1191.3,800.8C1194.9,800.8 1198.5,924.8 1202.1,924.8C1205.2,924.8 1208.4,800.4 1211.5,799.1C1215.6,797.4 1219.7,796.6 1223.8,796.6C1226.9,796.6 1230.1,930.3 1233.2,930.3C1237.1,930.3 1240.9,930.1 1244.8,929.8C1248.3,929.5 1251.9,799.6 1255.4,799.6C1258.7,799.6 1261.9,924.5 1265.2,924.8C1268.9,925.1 1272.6,925.3 1276.3,925.3C1279.4,925.3 1282.4,797.8 1285.5,797.6C1289.6,797.3 1293.7,797.1 1297.8,797.1C1301.1,797.1 1304.4,932.0 1307.7,932.0C1311.4,932.0 1315.0,930.2 1318.7,926.6C1322.0,923.4 1325.3,803.2 1328.6,800.8C1332.5,798.0 1336.3,796.6 1340.2,796.6C1343.6,796.6 1346.9,929.0 1350.3,929.0C1354.0,929.0 1357.7,799.1 1361.4,799.1C1364.9,799.1 1368.3,930.3 1371.8,930.3C1375.2,930.3 1378.7,797.1 1382.1,797.1C1386.0,797.1 1390.0,799.6 1393.9,804.5C1397.2,808.6 1400.5,932.7 1403.8,932.7C1406.9,932.7 1410.1,869.1 1413.2,868.1C1417.1,866.8 1420.9,866.2 1424.8,866.2C1428.5,866.2 1432.2,871.1 1435.9,871.1C1439.2,871.1 1442.4,868.0 1445.7,867.4C1449.8,866.6 1453.9,866.2 1458.0,866.2C1462.1,866.2 1466.3,867.5 1470.4,868.1C1476.3,869.0 1482.2,868.9 1488.1,870.6C1491.2,871.5 1494.4,906.7 1497.5,917.9C1501.4,931.8 1505.2,938.9 1509.1,938.9C1513.0,938.9 1517.0,919.1 1520.9,913.0C1524.2,907.9 1527.5,903.1 1530.8,903.1C1534.3,903.1 1537.9,907.6 1541.4,907.6C1544.8,907.6 1548.3,890.1 1551.7,890.1C1555.2,890.1 1558.6,906.8 1562.1,906.8C1565.8,906.8 1569.5,898.7 1573.2,898.7C1576.7,898.7 1580.3,905.6 1583.8,910.5C1587.1,915.0 1590.3,922.5 1593.6,926.6C1597.3,931.3 1601.0,935.7 1604.7,935.7C1608.4,935.7 1612.1,918.0 1615.8,910.5C1619.1,903.8 1622.4,892.8 1625.7,892.8C1629.0,892.8 1632.3,906.1 1635.6,910.5C1638.9,914.9 1642.1,918.6 1645.4,919.2C1649.9,920.0 1654.5,919.6 1659.0,920.4C1661.9,920.9 1664.7,941.4 1667.6,941.4C1671.7,941.4 1675.8,934.0 1679.9,927.8C1683.2,922.9 1686.4,910.0 1689.7,910.0C1693.0,910.0 1696.3,924.1 1699.6,929.0C1703.3,934.5 1707.0,940.1 1710.7,940.1C1713.6,940.1 1716.4,917.6 1719.3,913.0C1723.4,906.4 1727.5,903.1 1731.6,903.1C1735.3,903.1 1739.0,911.9 1742.7,917.9C1746.4,923.9 1750.1,938.9 1753.8,938.9C1757.5,938.9 1761.2,932.1 1764.9,929.8C1768.6,927.5 1772.3,928.3 1776.0,925.3C1778.6,923.2 1781.3,905.1 1783.9,905.1C1787.8,905.1 1791.8,905.6 1795.7,905.6C1799.8,905.6 1804.0,899.3 1808.1,897.0C1811.4,895.2 1814.6,892.5 1817.9,892.5C1821.6,892.5 1825.3,894.4 1829.0,898.2C1832.1,901.4 1835.3,937.7 1838.4,937.7C1842.0,937.7 1845.6,903.1 1849.2,903.1C1852.7,903.1 1856.3,919.1 1859.8,925.3C1863.3,931.4 1866.7,940.1 1870.2,940.1C1873.7,940.1 1877.3,932.7 1880.8,932.7C1884.3,932.7 1887.9,945.0 1891.4,945.0C1894.6,945.0 1897.8,929.0 1901.0,929.0C1905.0,929.0 1908.9,938.4 1912.9,938.4C1916.4,938.4 1920.0,925.8 1923.5,925.8C1926.9,925.8 1930.4,943.8 1933.8,943.8C1937.3,943.8 1940.7,918.7 1944.2,918.7C1947.7,918.7 1951.3,938.4 1954.8,939.6C1958.3,940.8 1961.9,941.4 1965.4,941.4C1968.8,941.4 1972.3,932.6 1975.7,931.5C1979.2,930.4 1982.8,929.8 1986.3,929.8C1989.8,929.8 1993.2,934.0 1996.7,934.0C2000.4,934.0 2004.1,931.5 2007.8,931.5C2011.2,931.5 2014.7,931.7 2018.1,932.0C2021.6,932.3 2025.2,943.3 2028.7,943.3C2032.2,943.3 2035.6,933.2 2039.1,933.2C2043.3,933.2 2047.5,934.0 2051.7,934.0C2054.7,934.0 2057.8,893.8 2060.8,893.8C2064.3,893.8 2067.9,908.1 2071.4,908.1C2075.0,908.1 2078.6,897.0 2082.2,897.0C2085.5,897.0 2088.8,909.7 2092.1,915.5C2095.8,922.0 2099.5,930.6 2103.2,933.5C2106.7,936.3 2110.3,937.7 2113.8,937.7C2117.3,937.7 2120.9,922.1 2124.4,922.1C2127.8,922.1 2131.3,933.9 2134.7,935.7C2138.8,937.8 2143.0,938.9 2147.1,938.9C2150.1,938.9 2153.2,891.3 2156.2,891.3C2159.7,891.3 2163.3,899.2 2166.8,905.6C2170.1,911.6 2173.4,922.3 2176.7,927.8C2180.4,933.9 2184.1,938.9 2187.8,938.9C2191.5,938.9 2195.1,920.8 2198.8,911.8" fill="none" stroke="#e5493a" stroke-width="4" stroke-linejoin="round" stroke-linecap="butt"/></svg>
<div style="position:absolute;left:2255px;top:530px;width:1114px;height:516px;background:#7e3b3a;border-radius:30px"></div>
<div style="position:absolute;left:2259px;top:534px;width:1106px;height:508px;background:#181818;border:2px solid #303030;border-radius:26px;box-sizing:border-box"></div>
<div style="position:absolute;left:2309px;top:594px;width:24px;height:24px;background:#7a45c4;border-radius:50%"></div>
<div style="position:absolute;left:2350.0px;top:592.4px;white-space:nowrap;font-family:'Liberation Sans', sans-serif;font-size:29px;line-height:29px;font-weight:400;color:#fafafa;letter-spacing:0.31px;">Vibration</div>
<div style="position:absolute;left:3151px;top:584px;width:164px;height:44px;border:2px solid #333;border-radius:22px;box-sizing:border-box"></div>
<div style="position:absolute;left:3169.0px;top:594.1px;white-space:nowrap;font-family:'Liberation Mono', monospace;font-size:26px;line-height:26px;font-weight:400;color:#fafafa;letter-spacing:-1.35px;">3.87 mm/s</div>
<div style="position:absolute;left:2977px;top:584px;width:158px;height:44px;background:#8d4544;border-radius:22px"></div>
<div style="position:absolute;left:2996.0px;top:593.8px;white-space:nowrap;font-family:'Liberation Sans', sans-serif;font-size:25px;line-height:25px;font-weight:400;color:#f3e4e4;letter-spacing:0.93px;">oscillation</div>
<div style="position:absolute;left:2310.0px;top:648.0px;white-space:nowrap;font-family:'Liberation Sans', sans-serif;font-size:26px;line-height:26px;font-weight:400;color:#9e9e9e;letter-spacing:-0.26px;">Quality: 75%</div>
<div style="position:absolute;left:2473px;top:660px;width:5px;height:5px;background:#9e9e9e;border-radius:50%"></div>
<div style="position:absolute;left:2497.0px;top:648.0px;white-space:nowrap;font-family:'Liberation Sans', sans-serif;font-size:26px;line-height:26px;font-weight:400;color:#9e9e9e;letter-spacing:-0.23px;">Range: 0 - 15 mm/s</div>
<svg style="position:absolute;left:0;top:0;overflow:visible" width="1" height="1"><defs><linearGradient id="g1" x1="0" y1="799.1" x2="0" y2="965" gradientUnits="userSpaceOnUse"><stop offset="0" stop-color="#9b5cf0" stop-opacity="0.25"/><stop offset="1" stop-color="#9b5cf0" stop-opacity="0.03"/></linearGradient></defs><path d="M2287,919 L3337,919" stroke="#4a4a4a" stroke-width="2.2" stroke-dasharray="6 6"/><path d="M2286.2,966.0C2289.9,922.4 2293.6,835.3 2297.3,835.3C2301.0,835.3 2304.7,966.0 2308.4,966.0C2311.9,966.0 2315.5,840.3 2319.0,840.3C2322.4,840.3 2325.9,966.0 2329.3,966.0C2332.8,966.0 2336.4,851.4 2339.9,851.4C2343.5,851.4 2347.2,966.0 2350.8,966.0C2354.3,966.0 2357.9,854.3 2361.4,854.3C2364.8,854.3 2368.3,966.0 2371.7,966.0C2375.2,966.0 2378.8,966.0 2382.3,966.0C2385.8,966.0 2389.4,849.4 2392.9,849.4C2396.5,849.4 2400.2,966.0 2403.8,966.0C2407.3,966.0 2410.9,850.9 2414.4,850.9C2417.9,850.9 2421.5,966.0 2425.0,966.0C2428.0,966.0 2431.1,852.5 2434.1,846.4C2437.0,840.7 2439.8,839.0 2442.7,837.8C2446.8,836.1 2450.9,837.0 2455.0,835.3C2459.0,833.7 2462.9,826.7 2466.9,826.7C2470.8,826.7 2474.6,831.1 2478.5,831.1C2481.8,831.1 2485.0,830.0 2488.3,827.9C2491.8,825.6 2495.4,814.9 2498.9,814.9C2502.4,814.9 2505.8,966.0 2509.3,966.0C2523.3,966.0 2537.2,966.0 2551.2,966.0C2554.9,966.0 2558.6,964.3 2562.3,964.3C2566.0,964.3 2569.7,966.5 2573.4,966.5C2577.5,966.5 2581.6,964.0 2585.7,964.0C2588.6,964.0 2591.4,965.5 2594.3,965.5C2597.9,965.5 2601.4,799.6 2605.0,799.6C2608.4,799.6 2611.9,966.0 2615.3,966.0C2626.0,966.0 2636.7,966.0 2647.4,966.0C2650.7,966.0 2653.9,827.9 2657.2,827.9C2661.2,827.9 2665.1,828.3 2669.1,829.2C2672.4,829.9 2675.6,966.0 2678.9,966.0C2682.5,966.0 2686.2,966.0 2689.8,966.0C2693.3,966.0 2696.9,844.5 2700.4,844.5C2703.9,844.5 2707.5,845.3 2711.0,846.9C2714.4,848.5 2717.9,966.0 2721.3,966.0C2735.7,966.0 2750.1,966.0 2764.5,966.0C2768.0,966.0 2771.6,852.6 2775.1,852.6C2778.5,852.6 2782.0,966.0 2785.4,966.0C2788.7,966.0 2792.0,847.4 2795.3,845.2C2799.0,842.7 2802.7,842.7 2806.4,841.5C2810.5,840.2 2814.5,837.8 2818.6,837.8C2821.7,837.8 2824.7,966.0 2827.8,966.0C2831.1,966.0 2834.3,815.5 2837.6,814.4C2841.4,813.1 2845.2,812.4 2849.0,812.4C2852.4,812.4 2855.9,966.0 2859.3,966.0C2866.7,966.0 2874.1,966.0 2881.5,966.0C2884.8,966.0 2888.1,799.1 2891.4,799.1C2895.1,799.1 2898.8,800.5 2902.5,803.3C2905.8,805.8 2909.0,966.0 2912.3,966.0C2916.0,966.0 2919.7,809.4 2923.4,809.4C2926.7,809.4 2930.0,966.0 2933.3,966.0C2962.1,966.0 2990.8,966.0 3019.6,966.0C3022.7,966.0 3025.8,848.9 3028.9,848.9C3032.8,848.9 3036.6,852.6 3040.5,852.6C3044.0,852.6 3047.6,848.4 3051.1,848.4C3054.6,848.4 3058.0,966.0 3061.5,966.0C3064.8,966.0 3068.0,862.3 3071.3,861.7C3075.0,861.0 3078.7,860.7 3082.4,860.7C3085.9,860.7 3089.5,966.0 3093.0,966.0C3100.4,966.0 3107.8,966.0 3115.2,966.0C3118.2,966.0 3121.3,845.2 3124.3,845.2C3128.2,845.2 3132.0,846.4 3135.9,846.4C3139.4,846.4 3143.0,842.8 3146.5,841.5C3150.2,840.1 3153.9,838.5 3157.6,838.5C3160.9,838.5 3164.2,966.0 3167.5,966.0C3170.8,966.0 3174.1,914.9 3177.4,914.2C3181.1,913.4 3184.8,913.0 3188.5,913.0C3192.0,913.0 3195.6,944.6 3199.1,944.6C3202.9,944.6 3206.8,932.9 3210.6,924.1C3214.3,915.6 3218.0,904.6 3221.7,893.3C3225.2,882.7 3228.6,867.4 3232.1,858.8C3235.2,851.0 3238.4,842.7 3241.5,842.7C3245.2,842.7 3248.9,849.1 3252.6,852.6C3255.5,855.3 3258.3,855.7 3261.2,861.2C3264.9,868.3 3268.6,884.1 3272.3,895.7C3276.2,907.9 3280.0,932.7 3283.9,932.7C3287.4,932.7 3291.0,917.5 3294.5,909.3C3298.2,900.7 3301.9,891.6 3305.6,882.2C3308.9,873.9 3312.1,857.0 3315.4,856.3C3319.1,855.5 3322.8,855.1 3326.5,855.1C3329.8,855.1 3333.1,879.2 3336.4,891.3L3336.4,965L2286.2,965Z" fill="url(#g1)"/><path d="M2286.2,966.0C2289.9,922.4 2293.6,835.3 2297.3,835.3C2301.0,835.3 2304.7,966.0 2308.4,966.0C2311.9,966.0 2315.5,840.3 2319.0,840.3C2322.4,840.3 2325.9,966.0 2329.3,966.0C2332.8,966.0 2336.4,851.4 2339.9,851.4C2343.5,851.4 2347.2,966.0 2350.8,966.0C2354.3,966.0 2357.9,854.3 2361.4,854.3C2364.8,854.3 2368.3,966.0 2371.7,966.0C2375.2,966.0 2378.8,966.0 2382.3,966.0C2385.8,966.0 2389.4,849.4 2392.9,849.4C2396.5,849.4 2400.2,966.0 2403.8,966.0C2407.3,966.0 2410.9,850.9 2414.4,850.9C2417.9,850.9 2421.5,966.0 2425.0,966.0C2428.0,966.0 2431.1,852.5 2434.1,846.4C2437.0,840.7 2439.8,839.0 2442.7,837.8C2446.8,836.1 2450.9,837.0 2455.0,835.3C2459.0,833.7 2462.9,826.7 2466.9,826.7C2470.8,826.7 2474.6,831.1 2478.5,831.1C2481.8,831.1 2485.0,830.0 2488.3,827.9C2491.8,825.6 2495.4,814.9 2498.9,814.9C2502.4,814.9 2505.8,966.0 2509.3,966.0C2523.3,966.0 2537.2,966.0 2551.2,966.0C2554.9,966.0 2558.6,964.3 2562.3,964.3C2566.0,964.3 2569.7,966.5 2573.4,966.5C2577.5,966.5 2581.6,964.0 2585.7,964.0C2588.6,964.0 2591.4,965.5 2594.3,965.5C2597.9,965.5 2601.4,799.6 2605.0,799.6C2608.4,799.6 2611.9,966.0 2615.3,966.0C2626.0,966.0 2636.7,966.0 2647.4,966.0C2650.7,966.0 2653.9,827.9 2657.2,827.9C2661.2,827.9 2665.1,828.3 2669.1,829.2C2672.4,829.9 2675.6,966.0 2678.9,966.0C2682.5,966.0 2686.2,966.0 2689.8,966.0C2693.3,966.0 2696.9,844.5 2700.4,844.5C2703.9,844.5 2707.5,845.3 2711.0,846.9C2714.4,848.5 2717.9,966.0 2721.3,966.0C2735.7,966.0 2750.1,966.0 2764.5,966.0C2768.0,966.0 2771.6,852.6 2775.1,852.6C2778.5,852.6 2782.0,966.0 2785.4,966.0C2788.7,966.0 2792.0,847.4 2795.3,845.2C2799.0,842.7 2802.7,842.7 2806.4,841.5C2810.5,840.2 2814.5,837.8 2818.6,837.8C2821.7,837.8 2824.7,966.0 2827.8,966.0C2831.1,966.0 2834.3,815.5 2837.6,814.4C2841.4,813.1 2845.2,812.4 2849.0,812.4C2852.4,812.4 2855.9,966.0 2859.3,966.0C2866.7,966.0 2874.1,966.0 2881.5,966.0C2884.8,966.0 2888.1,799.1 2891.4,799.1C2895.1,799.1 2898.8,800.5 2902.5,803.3C2905.8,805.8 2909.0,966.0 2912.3,966.0C2916.0,966.0 2919.7,809.4 2923.4,809.4C2926.7,809.4 2930.0,966.0 2933.3,966.0C2962.1,966.0 2990.8,966.0 3019.6,966.0C3022.7,966.0 3025.8,848.9 3028.9,848.9C3032.8,848.9 3036.6,852.6 3040.5,852.6C3044.0,852.6 3047.6,848.4 3051.1,848.4C3054.6,848.4 3058.0,966.0 3061.5,966.0C3064.8,966.0 3068.0,862.3 3071.3,861.7C3075.0,861.0 3078.7,860.7 3082.4,860.7C3085.9,860.7 3089.5,966.0 3093.0,966.0C3100.4,966.0 3107.8,966.0 3115.2,966.0C3118.2,966.0 3121.3,845.2 3124.3,845.2C3128.2,845.2 3132.0,846.4 3135.9,846.4C3139.4,846.4 3143.0,842.8 3146.5,841.5C3150.2,840.1 3153.9,838.5 3157.6,838.5C3160.9,838.5 3164.2,966.0 3167.5,966.0C3170.8,966.0 3174.1,914.9 3177.4,914.2C3181.1,913.4 3184.8,913.0 3188.5,913.0C3192.0,913.0 3195.6,944.6 3199.1,944.6C3202.9,944.6 3206.8,932.9 3210.6,924.1C3214.3,915.6 3218.0,904.6 3221.7,893.3C3225.2,882.7 3228.6,867.4 3232.1,858.8C3235.2,851.0 3238.4,842.7 3241.5,842.7C3245.2,842.7 3248.9,849.1 3252.6,852.6C3255.5,855.3 3258.3,855.7 3261.2,861.2C3264.9,868.3 3268.6,884.1 3272.3,895.7C3276.2,907.9 3280.0,932.7 3283.9,932.7C3287.4,932.7 3291.0,917.5 3294.5,909.3C3298.2,900.7 3301.9,891.6 3305.6,882.2C3308.9,873.9 3312.1,857.0 3315.4,856.3C3319.1,855.5 3322.8,855.1 3326.5,855.1C3329.8,855.1 3333.1,879.2 3336.4,891.3" fill="none" stroke="#9b5cf0" stroke-width="4" stroke-linejoin="round" stroke-linecap="butt"/></svg>
<div style="position:absolute;left:1117px;top:1070px;width:1114px;height:516px;background:#7e3b3a;border-radius:30px"></div>
<div style="position:absolute;left:1121px;top:1074px;width:1106px;height:508px;background:#181818;border:2px solid #303030;border-radius:26px;box-sizing:border-box"></div>
<div style="position:absolute;left:1171px;top:1134px;width:24px;height:24px;background:#3a7fc0;border-radius:50%"></div>
<div style="position:absolute;left:1212.0px;top:1132.4px;white-space:nowrap;font-family:'Liberation Sans', sans-serif;font-size:29px;line-height:29px;font-weight:400;color:#fafafa;letter-spacing:0.36px;">Pressure</div>
<div style="position:absolute;left:2027px;top:1124px;width:150px;height:44px;border:2px solid #333;border-radius:22px;box-sizing:border-box"></div>
<div style="position:absolute;left:2045.0px;top:1134.1px;white-space:nowrap;font-family:'Liberation Mono', monospace;font-size:26px;line-height:26px;font-weight:400;color:#fafafa;letter-spacing:-1.35px;">4.45 bar</div>
<div style="position:absolute;left:1835px;top:1124px;width:176px;height:44px;background:#8d4544;border-radius:22px"></div>
<div style="position:absolute;left:1854.0px;top:1133.8px;white-space:nowrap;font-family:'Liberation Sans', sans-serif;font-size:25px;line-height:25px;font-weight:400;color:#f3e4e4;letter-spacing:0.54px;">degradation</div>
<div style="position:absolute;left:1172.0px;top:1188.0px;white-space:nowrap;font-family:'Liberation Sans', sans-serif;font-size:26px;line-height:26px;font-weight:400;color:#9e9e9e;letter-spacing:-0.26px;">Quality: 40%</div>
<div style="position:absolute;left:1335px;top:1200px;width:5px;height:5px;background:#9e9e9e;border-radius:50%"></div>
<div style="position:absolute;left:1359.0px;top:1188.0px;white-space:nowrap;font-family:'Liberation Sans', sans-serif;font-size:26px;line-height:26px;font-weight:400;color:#9e9e9e;letter-spacing:-0.21px;">Range: 0 - 10 bar</div>
<svg style="position:absolute;left:0;top:0;overflow:visible" width="1" height="1"><defs><linearGradient id="g2" x1="0" y1="1305.9" x2="0" y2="1505" gradientUnits="userSpaceOnUse"><stop offset="0" stop-color="#41a2ec" stop-opacity="0.25"/><stop offset="1" stop-color="#41a2ec" stop-opacity="0.03"/></linearGradient></defs><path d="M1149,1430 L2199,1430" stroke="#4a4a4a" stroke-width="2.2" stroke-dasharray="6 6"/><path d="M1149.1,1305.9C1272.6,1305.9 1396.2,1305.9 1519.7,1305.9C1520.7,1305.9 1521.6,1307.5 1522.6,1310.8C1524.9,1318.6 1527.2,1420.5 1529.5,1420.5C1533.5,1420.5 1537.4,1415.1 1541.4,1415.1C1544.8,1415.1 1548.3,1423.0 1551.7,1423.0C1555.2,1423.0 1558.6,1415.6 1562.1,1415.6C1565.8,1415.6 1569.5,1421.0 1573.2,1421.0C1576.7,1421.0 1580.3,1416.3 1583.8,1416.3C1587.3,1416.3 1590.9,1420.0 1594.4,1420.0C1597.8,1420.0 1601.3,1414.9 1604.7,1414.9C1608.2,1414.9 1611.8,1419.3 1615.3,1419.3C1618.8,1419.3 1622.2,1413.9 1625.7,1413.9C1629.0,1413.9 1632.3,1415.1 1635.6,1415.1C1639.7,1415.1 1643.8,1415.1 1647.9,1415.1C1651.2,1415.1 1654.5,1418.1 1657.8,1418.1C1661.1,1418.1 1664.3,1417.6 1667.6,1417.6C1671.7,1417.6 1675.9,1418.8 1680.0,1419.3C1687.0,1420.1 1694.0,1419.9 1701.0,1421.0C1704.3,1421.5 1707.5,1433.3 1710.8,1437.8C1714.9,1443.5 1719.0,1447.1 1723.1,1449.6C1726.0,1451.3 1728.9,1451.3 1731.8,1452.6C1735.5,1454.2 1739.2,1458.7 1742.9,1458.7C1746.6,1458.7 1750.3,1457.1 1754.0,1453.8C1757.3,1450.9 1760.5,1438.5 1763.8,1438.5C1767.1,1438.5 1770.4,1465.4 1773.7,1465.4C1777.4,1465.4 1781.1,1464.0 1784.8,1461.2C1788.3,1458.5 1791.9,1448.4 1795.4,1448.4C1798.8,1448.4 1802.3,1466.1 1805.7,1466.1C1809.4,1466.1 1813.1,1462.4 1816.8,1462.4C1820.3,1462.4 1823.9,1470.6 1827.4,1470.6C1830.9,1470.6 1834.3,1445.2 1837.8,1445.2C1841.3,1445.2 1844.9,1464.2 1848.4,1464.2C1851.8,1464.2 1855.3,1460.0 1858.7,1460.0C1862.4,1460.0 1866.1,1469.3 1869.8,1469.3C1873.3,1469.3 1876.7,1452.6 1880.2,1452.6C1883.7,1452.6 1887.3,1471.1 1890.8,1471.1C1894.5,1471.1 1898.2,1468.3 1901.9,1464.9C1905.2,1461.9 1908.5,1452.6 1911.8,1452.6C1915.5,1452.6 1919.2,1455.0 1922.9,1455.0C1926.6,1455.0 1930.2,1454.6 1933.9,1454.6C1937.4,1454.6 1940.8,1461.2 1944.3,1461.2C1947.6,1461.2 1950.9,1448.9 1954.2,1448.9C1957.7,1448.9 1961.3,1463.8 1964.8,1467.4C1968.3,1471.0 1971.9,1472.8 1975.4,1472.8C1979.0,1472.8 1982.6,1460.0 1986.2,1460.0C1989.7,1460.0 1993.3,1471.1 1996.8,1471.1C2000.1,1471.1 2003.4,1452.3 2006.7,1451.8C2010.4,1451.2 2014.1,1450.9 2017.8,1450.9C2021.2,1450.9 2024.7,1451.1 2028.1,1451.4C2032.1,1451.8 2036.0,1453.3 2040.0,1453.3C2043.4,1453.3 2046.9,1440.7 2050.3,1440.7C2053.8,1440.7 2057.4,1453.9 2060.9,1458.7C2064.4,1463.5 2068.0,1469.3 2071.5,1469.3C2075.0,1469.3 2078.4,1444.0 2081.9,1444.0C2085.4,1444.0 2089.0,1465.4 2092.5,1465.4C2096.2,1465.4 2099.9,1441.5 2103.6,1441.5C2107.0,1441.5 2110.5,1462.0 2113.9,1462.0C2117.4,1462.0 2120.8,1439.8 2124.3,1439.8C2127.8,1439.8 2131.4,1446.7 2134.9,1448.9C2138.4,1451.2 2142.0,1453.3 2145.5,1453.3C2149.4,1453.3 2153.2,1448.4 2157.1,1448.4C2160.4,1448.4 2163.6,1449.7 2166.9,1452.1C2170.6,1454.8 2174.3,1464.9 2178.0,1464.9C2181.3,1464.9 2184.6,1434.5 2187.9,1433.4C2191.6,1432.2 2195.3,1432.2 2199.0,1431.6L2199.0,1505L1149.1,1505Z" fill="url(#g2)"/><path d="M1149.1,1305.9C1272.6,1305.9 1396.2,1305.9 1519.7,1305.9C1520.7,1305.9 1521.6,1307.5 1522.6,1310.8C1524.9,1318.6 1527.2,1420.5 1529.5,1420.5C1533.5,1420.5 1537.4,1415.1 1541.4,1415.1C1544.8,1415.1 1548.3,1423.0 1551.7,1423.0C1555.2,1423.0 1558.6,1415.6 1562.1,1415.6C1565.8,1415.6 1569.5,1421.0 1573.2,1421.0C1576.7,1421.0 1580.3,1416.3 1583.8,1416.3C1587.3,1416.3 1590.9,1420.0 1594.4,1420.0C1597.8,1420.0 1601.3,1414.9 1604.7,1414.9C1608.2,1414.9 1611.8,1419.3 1615.3,1419.3C1618.8,1419.3 1622.2,1413.9 1625.7,1413.9C1629.0,1413.9 1632.3,1415.1 1635.6,1415.1C1639.7,1415.1 1643.8,1415.1 1647.9,1415.1C1651.2,1415.1 1654.5,1418.1 1657.8,1418.1C1661.1,1418.1 1664.3,1417.6 1667.6,1417.6C1671.7,1417.6 1675.9,1418.8 1680.0,1419.3C1687.0,1420.1 1694.0,1419.9 1701.0,1421.0C1704.3,1421.5 1707.5,1433.3 1710.8,1437.8C1714.9,1443.5 1719.0,1447.1 1723.1,1449.6C1726.0,1451.3 1728.9,1451.3 1731.8,1452.6C1735.5,1454.2 1739.2,1458.7 1742.9,1458.7C1746.6,1458.7 1750.3,1457.1 1754.0,1453.8C1757.3,1450.9 1760.5,1438.5 1763.8,1438.5C1767.1,1438.5 1770.4,1465.4 1773.7,1465.4C1777.4,1465.4 1781.1,1464.0 1784.8,1461.2C1788.3,1458.5 1791.9,1448.4 1795.4,1448.4C1798.8,1448.4 1802.3,1466.1 1805.7,1466.1C1809.4,1466.1 1813.1,1462.4 1816.8,1462.4C1820.3,1462.4 1823.9,1470.6 1827.4,1470.6C1830.9,1470.6 1834.3,1445.2 1837.8,1445.2C1841.3,1445.2 1844.9,1464.2 1848.4,1464.2C1851.8,1464.2 1855.3,1460.0 1858.7,1460.0C1862.4,1460.0 1866.1,1469.3 1869.8,1469.3C1873.3,1469.3 1876.7,1452.6 1880.2,1452.6C1883.7,1452.6 1887.3,1471.1 1890.8,1471.1C1894.5,1471.1 1898.2,1468.3 1901.9,1464.9C1905.2,1461.9 1908.5,1452.6 1911.8,1452.6C1915.5,1452.6 1919.2,1455.0 1922.9,1455.0C1926.6,1455.0 1930.2,1454.6 1933.9,1454.6C1937.4,1454.6 1940.8,1461.2 1944.3,1461.2C1947.6,1461.2 1950.9,1448.9 1954.2,1448.9C1957.7,1448.9 1961.3,1463.8 1964.8,1467.4C1968.3,1471.0 1971.9,1472.8 1975.4,1472.8C1979.0,1472.8 1982.6,1460.0 1986.2,1460.0C1989.7,1460.0 1993.3,1471.1 1996.8,1471.1C2000.1,1471.1 2003.4,1452.3 2006.7,1451.8C2010.4,1451.2 2014.1,1450.9 2017.8,1450.9C2021.2,1450.9 2024.7,1451.1 2028.1,1451.4C2032.1,1451.8 2036.0,1453.3 2040.0,1453.3C2043.4,1453.3 2046.9,1440.7 2050.3,1440.7C2053.8,1440.7 2057.4,1453.9 2060.9,1458.7C2064.4,1463.5 2068.0,1469.3 2071.5,1469.3C2075.0,1469.3 2078.4,1444.0 2081.9,1444.0C2085.4,1444.0 2089.0,1465.4 2092.5,1465.4C2096.2,1465.4 2099.9,1441.5 2103.6,1441.5C2107.0,1441.5 2110.5,1462.0 2113.9,1462.0C2117.4,1462.0 2120.8,1439.8 2124.3,1439.8C2127.8,1439.8 2131.4,1446.7 2134.9,1448.9C2138.4,1451.2 2142.0,1453.3 2145.5,1453.3C2149.4,1453.3 2153.2,1448.4 2157.1,1448.4C2160.4,1448.4 2163.6,1449.7 2166.9,1452.1C2170.6,1454.8 2174.3,1464.9 2178.0,1464.9C2181.3,1464.9 2184.6,1434.5 2187.9,1433.4C2191.6,1432.2 2195.3,1432.2 2199.0,1431.6" fill="none" stroke="#41a2ec" stroke-width="4" stroke-linejoin="round" stroke-linecap="butt"/></svg>
<div style="position:absolute;left:2255px;top:1070px;width:1114px;height:516px;background:#7e3b3a;border-radius:30px"></div>
<div style="position:absolute;left:2259px;top:1074px;width:1106px;height:508px;background:#181818;border:2px solid #303030;border-radius:26px;box-sizing:border-box"></div>
<div style="position:absolute;left:2309px;top:1134px;width:24px;height:24px;background:#c9a33a;border-radius:50%"></div>
<div style="position:absolute;left:2350.0px;top:1132.4px;white-space:nowrap;font-family:'Liberation Sans', sans-serif;font-size:29px;line-height:29px;font-weight:400;color:#fafafa;letter-spacing:0.34px;">Current</div>
<div style="position:absolute;left:3194px;top:1124px;width:121px;height:44px;border:2px solid #333;border-radius:22px;box-sizing:border-box"></div>
<div style="position:absolute;left:3212.0px;top:1134.1px;white-space:nowrap;font-family:'Liberation Mono', monospace;font-size:26px;line-height:26px;font-weight:400;color:#fafafa;letter-spacing:-1.35px;">6.66 A</div>
<div style="position:absolute;left:3002px;top:1124px;width:176px;height:44px;background:#8d4544;border-radius:22px"></div>
<div style="position:absolute;left:3021.0px;top:1133.8px;white-space:nowrap;font-family:'Liberation Sans', sans-serif;font-size:25px;line-height:25px;font-weight:400;color:#f3e4e4;letter-spacing:0.54px;">degradation</div>
<div style="position:absolute;left:2310.0px;top:1188.0px;white-space:nowrap;font-family:'Liberation Sans', sans-serif;font-size:26px;line-height:26px;font-weight:400;color:#9e9e9e;letter-spacing:-0.26px;">Quality: 61%</div>
<div style="position:absolute;left:2473px;top:1200px;width:5px;height:5px;background:#9e9e9e;border-radius:50%"></div>
<div style="position:absolute;left:2497.0px;top:1188.0px;white-space:nowrap;font-family:'Liberation Sans', sans-serif;font-size:26px;line-height:26px;font-weight:400;color:#9e9e9e;letter-spacing:-0.22px;">Range: 0 - 25 A</div>
<svg style="position:absolute;left:0;top:0;overflow:visible" width="1" height="1"><defs><linearGradient id="g3" x1="0" y1="1305.9" x2="0" y2="1505" gradientUnits="userSpaceOnUse"><stop offset="0" stop-color="#f4c542" stop-opacity="0.25"/><stop offset="1" stop-color="#f4c542" stop-opacity="0.03"/></linearGradient></defs><path d="M2287,1424 L3337,1424" stroke="#4a4a4a" stroke-width="2.2" stroke-dasharray="6 6"/><path d="M2287.5,1305.9C2548.8,1305.9 2810.2,1305.9 3071.5,1305.9C3072.3,1305.9 3073.1,1307.5 3073.9,1310.8C3076.4,1320.9 3078.8,1400.8 3081.3,1400.8C3085.0,1400.8 3088.7,1400.1 3092.4,1400.1C3096.1,1400.1 3099.8,1403.3 3103.5,1403.3C3107.2,1403.3 3110.9,1400.8 3114.6,1400.8C3118.3,1400.8 3122.0,1401.6 3125.7,1402.5C3129.0,1403.3 3132.3,1404.5 3135.6,1405.7C3139.3,1407.0 3143.0,1409.9 3146.7,1409.9C3150.4,1409.9 3154.1,1408.9 3157.8,1408.2C3161.1,1407.6 3164.3,1406.2 3167.6,1406.2C3171.3,1406.2 3175.0,1409.4 3178.7,1410.7C3182.0,1411.9 3185.3,1413.6 3188.6,1413.9C3192.3,1414.2 3196.0,1414.1 3199.7,1414.4C3203.0,1414.7 3206.2,1416.1 3209.5,1416.1C3213.2,1416.1 3216.9,1413.9 3220.6,1413.9C3224.3,1413.9 3228.0,1416.0 3231.7,1416.8C3235.0,1417.5 3238.3,1418.6 3241.6,1418.6C3245.3,1418.6 3249.0,1416.8 3252.7,1416.8C3256.0,1416.8 3259.3,1418.9 3262.6,1420.5C3265.9,1422.1 3269.1,1426.2 3272.4,1426.2C3276.1,1426.2 3279.8,1425.5 3283.5,1425.5C3287.2,1425.5 3290.9,1427.1 3294.6,1428.7C3297.9,1430.1 3301.2,1430.5 3304.5,1434.1C3307.4,1437.2 3310.2,1464.9 3313.1,1464.9C3317.2,1464.9 3321.3,1464.4 3325.4,1464.4C3329.1,1464.4 3332.8,1469.3 3336.5,1471.8L3336.5,1505L2287.5,1505Z" fill="url(#g3)"/><path d="M2287.5,1305.9C2548.8,1305.9 2810.2,1305.9 3071.5,1305.9C3072.3,1305.9 3073.1,1307.5 3073.9,1310.8C3076.4,1320.9 3078.8,1400.8 3081.3,1400.8C3085.0,1400.8 3088.7,1400.1 3092.4,1400.1C3096.1,1400.1 3099.8,1403.3 3103.5,1403.3C3107.2,1403.3 3110.9,1400.8 3114.6,1400.8C3118.3,1400.8 3122.0,1401.6 3125.7,1402.5C3129.0,1403.3 3132.3,1404.5 3135.6,1405.7C3139.3,1407.0 3143.0,1409.9 3146.7,1409.9C3150.4,1409.9 3154.1,1408.9 3157.8,1408.2C3161.1,1407.6 3164.3,1406.2 3167.6,1406.2C3171.3,1406.2 3175.0,1409.4 3178.7,1410.7C3182.0,1411.9 3185.3,1413.6 3188.6,1413.9C3192.3,1414.2 3196.0,1414.1 3199.7,1414.4C3203.0,1414.7 3206.2,1416.1 3209.5,1416.1C3213.2,1416.1 3216.9,1413.9 3220.6,1413.9C3224.3,1413.9 3228.0,1416.0 3231.7,1416.8C3235.0,1417.5 3238.3,1418.6 3241.6,1418.6C3245.3,1418.6 3249.0,1416.8 3252.7,1416.8C3256.0,1416.8 3259.3,1418.9 3262.6,1420.5C3265.9,1422.1 3269.1,1426.2 3272.4,1426.2C3276.1,1426.2 3279.8,1425.5 3283.5,1425.5C3287.2,1425.5 3290.9,1427.1 3294.6,1428.7C3297.9,1430.1 3301.2,1430.5 3304.5,1434.1C3307.4,1437.2 3310.2,1464.9 3313.1,1464.9C3317.2,1464.9 3321.3,1464.4 3325.4,1464.4C3329.1,1464.4 3332.8,1469.3 3336.5,1471.8" fill="none" stroke="#f4c542" stroke-width="4" stroke-linejoin="round" stroke-linecap="butt"/></svg>
<div style="position:absolute;left:1117px;top:1610px;width:1114px;height:516px;background:#7e3b3a;border-radius:30px"></div>
<div style="position:absolute;left:1121px;top:1614px;width:1106px;height:508px;background:#181818;border:2px solid #303030;border-radius:26px;box-sizing:border-box"></div>
<div style="position:absolute;left:1171px;top:1674px;width:24px;height:24px;background:#4fa38d;border-radius:50%"></div>
<div style="position:absolute;left:1212.0px;top:1672.4px;white-space:nowrap;font-family:'Liberation Sans', sans-serif;font-size:29px;line-height:29px;font-weight:400;color:#fafafa;letter-spacing:0.38px;">Flow</div>
<div style="position:absolute;left:1970px;top:1664px;width:207px;height:44px;border:2px solid #333;border-radius:22px;box-sizing:border-box"></div>
<div style="position:absolute;left:1988.0px;top:1674.1px;white-space:nowrap;font-family:'Liberation Mono', monospace;font-size:26px;line-height:26px;font-weight:400;color:#fafafa;letter-spacing:-1.35px;">104.58 L/min</div>
<div style="position:absolute;left:1856px;top:1664px;width:98px;height:44px;background:#7a3c3b;border-radius:22px"></div>
<div style="position:absolute;left:1875.0px;top:1673.8px;white-space:nowrap;font-family:'Liberation Sans', sans-serif;font-size:25px;line-height:25px;font-weight:400;color:#d9c9c9;letter-spacing:0.33px;">spike</div>
<div style="position:absolute;left:1172.0px;top:1728.0px;white-space:nowrap;font-family:'Liberation Sans', sans-serif;font-size:26px;line-height:26px;font-weight:400;color:#9e9e9e;letter-spacing:-0.26px;">Quality: 53%</div>
<div style="position:absolute;left:1335px;top:1740px;width:5px;height:5px;background:#9e9e9e;border-radius:50%"></div>
<div style="position:absolute;left:1359.0px;top:1728.0px;white-space:nowrap;font-family:'Liberation Sans', sans-serif;font-size:26px;line-height:26px;font-weight:400;color:#9e9e9e;letter-spacing:-0.22px;">Range: 0 - 300 L/min</div>
<svg style="position:absolute;left:0;top:0;overflow:visible" width="1" height="1"><defs><linearGradient id="g4" x1="0" y1="1845.9" x2="0" y2="2045" gradientUnits="userSpaceOnUse"><stop offset="0" stop-color="#5ccbb0" stop-opacity="0.25"/><stop offset="1" stop-color="#5ccbb0" stop-opacity="0.03"/></linearGradient></defs><path d="M1149,1969 L2199,1969" stroke="#4a4a4a" stroke-width="2.2" stroke-dasharray="6 6"/><path d="M1149.1,1845.9C1212.6,1845.9 1276.2,1845.9 1339.7,1845.9C1340.5,1845.9 1341.4,1847.5 1342.2,1850.8C1344.7,1860.5 1347.1,1946.6 1349.6,1947.7C1353.3,1949.4 1357.0,1950.2 1360.7,1950.2C1364.2,1950.2 1367.8,1945.0 1371.3,1945.0C1374.7,1945.0 1378.2,1949.2 1381.6,1950.7C1385.3,1952.4 1389.0,1954.4 1392.7,1954.4C1396.0,1954.4 1399.3,1948.7 1402.6,1948.7C1405.9,1948.7 1409.1,1948.9 1412.4,1949.4C1416.5,1950.0 1420.7,1957.3 1424.8,1957.3C1428.1,1957.3 1431.3,1951.9 1434.6,1951.9C1438.3,1951.9 1442.0,1952.3 1445.7,1953.1C1449.4,1953.9 1453.1,2002.0 1456.8,2002.0C1460.1,2002.0 1463.4,1999.5 1466.7,1999.2C1470.4,1998.9 1474.1,1999.0 1477.8,1998.7C1481.2,1998.4 1484.7,1895.2 1488.1,1895.2C1492.1,1895.2 1496.0,1897.3 1500.0,1901.4C1503.3,1904.8 1506.5,2002.0 1509.8,2002.0C1513.5,2002.0 1517.2,2000.5 1520.9,1997.5C1524.2,1994.8 1527.5,1907.5 1530.8,1907.5C1534.3,1907.5 1537.9,2006.1 1541.4,2006.1C1544.7,2006.1 1547.9,1902.8 1551.2,1898.9C1555.1,1894.3 1558.9,1892.0 1562.8,1892.0C1566.5,1892.0 1570.2,1896.0 1573.9,1897.7C1577.2,1899.2 1580.5,1899.1 1583.8,1901.9C1587.1,1904.7 1590.3,1988.0 1593.6,1995.0C1597.3,2002.9 1601.0,2006.9 1604.7,2006.9C1608.4,2006.9 1612.1,2005.4 1615.8,2002.4C1619.1,1999.7 1622.4,1907.5 1625.7,1907.5C1629.0,1907.5 1632.3,1981.6 1635.6,1988.9C1639.3,1997.1 1643.0,2001.2 1646.7,2001.2C1650.4,2001.2 1654.1,1895.9 1657.8,1895.9C1661.1,1895.9 1664.3,1992.5 1667.6,1993.8C1671.7,1995.5 1675.9,1994.8 1680.0,1996.3C1683.3,1997.5 1686.6,2001.2 1689.9,2001.2C1693.3,2001.2 1696.8,1902.6 1700.2,1902.6C1704.0,1902.6 1707.8,1903.4 1711.6,1905.1C1715.0,1906.6 1718.5,2001.2 1721.9,2001.2C1725.4,2001.2 1728.8,1897.7 1732.3,1897.7C1735.8,1897.7 1739.4,1995.0 1742.9,1995.0C1746.2,1995.0 1749.4,1906.0 1752.7,1902.6C1756.4,1898.8 1760.1,1897.2 1763.8,1896.9C1768.7,1896.6 1773.7,1896.4 1778.6,1896.4C1781.1,1896.4 1783.5,1898.1 1786.0,1901.4C1789.3,1905.9 1792.6,1998.7 1795.9,1998.7C1799.3,1998.7 1802.8,1902.6 1806.2,1902.6C1809.7,1902.6 1813.3,1913.7 1816.8,1913.7C1820.5,1913.7 1824.2,1907.1 1827.9,1905.1C1831.6,1903.0 1835.3,1901.4 1839.0,1901.4C1842.3,1901.4 1845.6,1999.6 1848.9,2001.2C1852.4,2002.9 1856.0,2003.7 1859.5,2003.7C1862.9,2003.7 1866.4,1900.9 1869.8,1900.9C1873.5,1900.9 1877.2,1995.0 1880.9,1998.7C1884.2,2002.0 1887.5,2003.7 1890.8,2003.7C1894.5,2003.7 1898.2,1900.9 1901.9,1900.9C1905.4,1900.9 1909.0,1995.0 1912.5,1995.0C1916.0,1995.0 1919.4,1903.3 1922.9,1903.3C1926.4,1903.3 1930.0,2002.4 1933.5,2002.4C1937.1,2002.4 1940.7,1998.7 1944.3,1998.7C1947.8,1998.7 1951.4,2011.8 1954.9,2011.8C1958.2,2011.8 1961.5,1917.0 1964.8,1911.2C1968.5,1904.7 1972.2,1901.4 1975.9,1901.4C1979.2,1901.4 1982.4,2000.7 1985.7,2002.0C1989.4,2003.5 1993.1,2004.2 1996.8,2004.2C2000.3,2004.2 2003.9,2003.5 2007.4,2002.0C2010.9,2000.6 2014.3,1917.7 2017.8,1911.2C2021.7,1903.8 2025.7,1900.1 2029.6,1900.1C2033.1,1900.1 2036.5,2002.1 2040.0,2003.7C2043.4,2005.3 2046.9,2006.1 2050.3,2006.1C2053.8,2006.1 2057.4,1910.6 2060.9,1907.5C2064.6,1904.2 2068.3,1902.6 2072.0,1902.6C2075.7,1902.6 2079.4,1905.5 2083.1,1911.2C2086.4,1916.3 2089.7,2006.3 2093.0,2008.6C2096.5,2011.1 2100.1,2012.3 2103.6,2012.3C2107.0,2012.3 2110.5,1907.5 2113.9,1907.5C2117.4,1907.5 2120.8,2006.1 2124.3,2006.1C2127.8,2006.1 2131.4,1912.5 2134.9,1912.5C2138.6,1912.5 2142.3,1912.7 2146.0,1913.2C2149.3,1913.6 2152.5,2004.9 2155.8,2004.9C2159.5,2004.9 2163.2,2004.7 2166.9,2004.4C2170.2,2004.1 2173.5,1912.1 2176.8,1910.0C2180.7,1907.5 2184.5,1906.3 2188.4,1906.3C2191.9,1906.3 2195.5,1972.0 2199.0,2004.9L2199.0,2045L1149.1,2045Z" fill="url(#g4)"/><path d="M1149.1,1845.9C1212.6,1845.9 1276.2,1845.9 1339.7,1845.9C1340.5,1845.9 1341.4,1847.5 1342.2,1850.8C1344.7,1860.5 1347.1,1946.6 1349.6,1947.7C1353.3,1949.4 1357.0,1950.2 1360.7,1950.2C1364.2,1950.2 1367.8,1945.0 1371.3,1945.0C1374.7,1945.0 1378.2,1949.2 1381.6,1950.7C1385.3,1952.4 1389.0,1954.4 1392.7,1954.4C1396.0,1954.4 1399.3,1948.7 1402.6,1948.7C1405.9,1948.7 1409.1,1948.9 1412.4,1949.4C1416.5,1950.0 1420.7,1957.3 1424.8,1957.3C1428.1,1957.3 1431.3,1951.9 1434.6,1951.9C1438.3,1951.9 1442.0,1952.3 1445.7,1953.1C1449.4,1953.9 1453.1,2002.0 1456.8,2002.0C1460.1,2002.0 1463.4,1999.5 1466.7,1999.2C1470.4,1998.9 1474.1,1999.0 1477.8,1998.7C1481.2,1998.4 1484.7,1895.2 1488.1,1895.2C1492.1,1895.2 1496.0,1897.3 1500.0,1901.4C1503.3,1904.8 1506.5,2002.0 1509.8,2002.0C1513.5,2002.0 1517.2,2000.5 1520.9,1997.5C1524.2,1994.8 1527.5,1907.5 1530.8,1907.5C1534.3,1907.5 1537.9,2006.1 1541.4,2006.1C1544.7,2006.1 1547.9,1902.8 1551.2,1898.9C1555.1,1894.3 1558.9,1892.0 1562.8,1892.0C1566.5,1892.0 1570.2,1896.0 1573.9,1897.7C1577.2,1899.2 1580.5,1899.1 1583.8,1901.9C1587.1,1904.7 1590.3,1988.0 1593.6,1995.0C1597.3,2002.9 1601.0,2006.9 1604.7,2006.9C1608.4,2006.9 1612.1,2005.4 1615.8,2002.4C1619.1,1999.7 1622.4,1907.5 1625.7,1907.5C1629.0,1907.5 1632.3,1981.6 1635.6,1988.9C1639.3,1997.1 1643.0,2001.2 1646.7,2001.2C1650.4,2001.2 1654.1,1895.9 1657.8,1895.9C1661.1,1895.9 1664.3,1992.5 1667.6,1993.8C1671.7,1995.5 1675.9,1994.8 1680.0,1996.3C1683.3,1997.5 1686.6,2001.2 1689.9,2001.2C1693.3,2001.2 1696.8,1902.6 1700.2,1902.6C1704.0,1902.6 1707.8,1903.4 1711.6,1905.1C1715.0,1906.6 1718.5,2001.2 1721.9,2001.2C1725.4,2001.2 1728.8,1897.7 1732.3,1897.7C1735.8,1897.7 1739.4,1995.0 1742.9,1995.0C1746.2,1995.0 1749.4,1906.0 1752.7,1902.6C1756.4,1898.8 1760.1,1897.2 1763.8,1896.9C1768.7,1896.6 1773.7,1896.4 1778.6,1896.4C1781.1,1896.4 1783.5,1898.1 1786.0,1901.4C1789.3,1905.9 1792.6,1998.7 1795.9,1998.7C1799.3,1998.7 1802.8,1902.6 1806.2,1902.6C1809.7,1902.6 1813.3,1913.7 1816.8,1913.7C1820.5,1913.7 1824.2,1907.1 1827.9,1905.1C1831.6,1903.0 1835.3,1901.4 1839.0,1901.4C1842.3,1901.4 1845.6,1999.6 1848.9,2001.2C1852.4,2002.9 1856.0,2003.7 1859.5,2003.7C1862.9,2003.7 1866.4,1900.9 1869.8,1900.9C1873.5,1900.9 1877.2,1995.0 1880.9,1998.7C1884.2,2002.0 1887.5,2003.7 1890.8,2003.7C1894.5,2003.7 1898.2,1900.9 1901.9,1900.9C1905.4,1900.9 1909.0,1995.0 1912.5,1995.0C1916.0,1995.0 1919.4,1903.3 1922.9,1903.3C1926.4,1903.3 1930.0,2002.4 1933.5,2002.4C1937.1,2002.4 1940.7,1998.7 1944.3,1998.7C1947.8,1998.7 1951.4,2011.8 1954.9,2011.8C1958.2,2011.8 1961.5,1917.0 1964.8,1911.2C1968.5,1904.7 1972.2,1901.4 1975.9,1901.4C1979.2,1901.4 1982.4,2000.7 1985.7,2002.0C1989.4,2003.5 1993.1,2004.2 1996.8,2004.2C2000.3,2004.2 2003.9,2003.5 2007.4,2002.0C2010.9,2000.6 2014.3,1917.7 2017.8,1911.2C2021.7,1903.8 2025.7,1900.1 2029.6,1900.1C2033.1,1900.1 2036.5,2002.1 2040.0,2003.7C2043.4,2005.3 2046.9,2006.1 2050.3,2006.1C2053.8,2006.1 2057.4,1910.6 2060.9,1907.5C2064.6,1904.2 2068.3,1902.6 2072.0,1902.6C2075.7,1902.6 2079.4,1905.5 2083.1,1911.2C2086.4,1916.3 2089.7,2006.3 2093.0,2008.6C2096.5,2011.1 2100.1,2012.3 2103.6,2012.3C2107.0,2012.3 2110.5,1907.5 2113.9,1907.5C2117.4,1907.5 2120.8,2006.1 2124.3,2006.1C2127.8,2006.1 2131.4,1912.5 2134.9,1912.5C2138.6,1912.5 2142.3,1912.7 2146.0,1913.2C2149.3,1913.6 2152.5,2004.9 2155.8,2004.9C2159.5,2004.9 2163.2,2004.7 2166.9,2004.4C2170.2,2004.1 2173.5,1912.1 2176.8,1910.0C2180.7,1907.5 2184.5,1906.3 2188.4,1906.3C2191.9,1906.3 2195.5,1972.0 2199.0,2004.9" fill="none" stroke="#5ccbb0" stroke-width="4" stroke-linejoin="round" stroke-linecap="butt"/></svg>
<div style="position:absolute;left:2259px;top:1614px;width:1106px;height:508px;background:#181818;border:2px solid #303030;border-radius:26px;box-sizing:border-box"></div>
<div style="position:absolute;left:2309px;top:1674px;width:24px;height:24px;background:#4a72c6;border-radius:50%"></div>
<div style="position:absolute;left:2350.0px;top:1672.4px;white-space:nowrap;font-family:'Liberation Sans', sans-serif;font-size:29px;line-height:29px;font-weight:400;color:#fafafa;letter-spacing:0.35px;">Humidity</div>
<div style="position:absolute;left:3180px;top:1664px;width:135px;height:44px;border:2px solid #333;border-radius:22px;box-sizing:border-box"></div>
<div style="position:absolute;left:3198.0px;top:1674.1px;white-space:nowrap;font-family:'Liberation Mono', monospace;font-size:26px;line-height:26px;font-weight:400;color:#fafafa;letter-spacing:-1.35px;">47.42 %</div>
<div style="position:absolute;left:2310.0px;top:1728.0px;white-space:nowrap;font-family:'Liberation Sans', sans-serif;font-size:26px;line-height:26px;font-weight:400;color:#9e9e9e;letter-spacing:-0.26px;">Quality: 92%</div>
<div style="position:absolute;left:2473px;top:1740px;width:5px;height:5px;background:#9e9e9e;border-radius:50%"></div>
<div style="position:absolute;left:2497.0px;top:1728.0px;white-space:nowrap;font-family:'Liberation Sans', sans-serif;font-size:26px;line-height:26px;font-weight:400;color:#9e9e9e;letter-spacing:-0.23px;">Range: 20 - 90 %</div>
<svg style="position:absolute;left:0;top:0;overflow:visible" width="1" height="1"><defs><linearGradient id="g5" x1="0" y1="1875.5" x2="0" y2="2045" gradientUnits="userSpaceOnUse"><stop offset="0" stop-color="#5189e8" stop-opacity="0.25"/><stop offset="1" stop-color="#5189e8" stop-opacity="0.03"/></linearGradient></defs><path d="M2287,1936 L3337,1936" stroke="#4a4a4a" stroke-width="2.2" stroke-dasharray="6 6"/><path d="M2287.4,1944.5C2291.1,1943.8 2294.8,1942.5 2298.5,1942.5C2302.0,1942.5 2305.6,1948.4 2309.1,1950.7C2312.5,1953.0 2316.0,1952.6 2319.4,1956.3C2322.7,1959.9 2326.0,2012.3 2329.3,2016.0C2333.0,2020.1 2336.7,2022.2 2340.4,2022.2C2343.9,2022.2 2347.3,1917.4 2350.8,1917.4C2354.2,1917.4 2357.5,1978.4 2360.9,1995.0C2364.5,2012.8 2368.1,2021.7 2371.7,2021.7C2375.2,2021.7 2378.8,1906.3 2382.3,1906.3C2385.6,1906.3 2388.9,1919.7 2392.2,1928.5C2395.9,1938.4 2399.6,1963.7 2403.3,1963.7C2407.0,1963.7 2410.7,1879.7 2414.4,1879.7C2417.7,1879.7 2420.9,1928.2 2424.2,1944.5C2427.9,1963.0 2431.6,1979.8 2435.3,1979.8C2438.6,1979.8 2441.9,1925.6 2445.2,1916.2C2449.1,1905.0 2453.1,1899.4 2457.0,1899.4C2460.5,1899.4 2463.9,2000.0 2467.4,2000.0C2470.9,2000.0 2474.5,1916.2 2478.0,1916.2C2481.4,1916.2 2484.9,1954.5 2488.3,1970.4C2491.8,1986.8 2495.4,2012.8 2498.9,2012.8C2502.4,2012.8 2505.8,1933.4 2509.3,1913.7C2513.0,1892.6 2516.7,1882.1 2520.4,1882.1C2523.7,1882.1 2526.9,1954.4 2530.2,1954.4C2533.9,1954.4 2537.6,1950.1 2541.3,1947.5C2544.8,1945.0 2548.4,1939.1 2551.9,1939.1C2555.4,1939.1 2558.8,1992.3 2562.3,1996.3C2565.8,2000.4 2569.4,2002.4 2572.9,2002.4C2576.4,2002.4 2579.8,1980.0 2583.3,1969.2C2586.7,1958.5 2590.2,1937.9 2593.6,1937.9C2597.4,1937.9 2601.2,1984.0 2605.0,1984.0C2608.4,1984.0 2611.9,1924.8 2615.3,1924.8C2619.0,1924.8 2622.7,1985.9 2626.4,1985.9C2630.1,1985.9 2633.8,1972.5 2637.5,1967.9C2641.0,1963.6 2644.4,1964.8 2647.9,1958.6C2651.0,1953.1 2654.1,1926.5 2657.2,1926.5C2661.2,1926.5 2665.1,1928.5 2669.1,1928.5C2672.5,1928.5 2676.0,1893.5 2679.4,1893.5C2682.9,1893.5 2686.3,1967.4 2689.8,1967.4C2693.5,1967.4 2697.2,1943.3 2700.9,1943.3C2704.4,1943.3 2708.0,1951.9 2711.5,1956.8C2715.0,1961.7 2718.6,1972.9 2722.1,1972.9C2725.5,1972.9 2729.0,1968.0 2732.4,1958.1C2735.9,1947.9 2739.5,1878.4 2743.0,1878.4C2746.5,1878.4 2749.9,1977.3 2753.4,1977.3C2757.1,1977.3 2760.8,1894.5 2764.5,1894.5C2767.9,1894.5 2771.4,1937.1 2774.8,1937.1C2778.3,1937.1 2781.9,1914.1 2785.4,1903.8C2788.9,1893.5 2792.5,1875.5 2796.0,1875.5C2799.7,1875.5 2803.4,1879.6 2807.1,1887.8C2811.4,1897.3 2815.7,1987.7 2820.0,1987.7C2825.9,1987.7 2831.9,1950.7 2837.8,1950.7C2841.6,1950.7 2845.3,1968.4 2849.1,1974.1C2852.5,1979.3 2856.0,1982.2 2859.4,1984.7C2863.1,1987.3 2866.8,1988.9 2870.5,1988.9C2873.8,1988.9 2877.1,1975.2 2880.4,1970.4C2884.1,1965.0 2887.8,1962.6 2891.5,1959.3C2894.8,1956.3 2898.1,1951.2 2901.4,1951.2C2905.1,1951.2 2908.8,1959.3 2912.5,1959.3C2916.0,1959.3 2919.6,1901.4 2923.1,1901.4C2926.5,1901.4 2930.0,1928.0 2933.4,1937.1C2936.7,1945.9 2940.0,1955.6 2943.3,1955.6C2947.2,1955.6 2951.2,1953.1 2955.1,1953.1C2958.6,1953.1 2962.0,1964.2 2965.5,1964.2C2968.8,1964.2 2972.0,1953.0 2975.3,1952.6C2979.4,1952.1 2983.6,1951.9 2987.7,1951.9C2991.0,1951.9 2994.2,1954.4 2997.5,1955.1C3001.0,1955.9 3004.6,1955.5 3008.1,1956.3C3011.6,1957.1 3015.0,1966.7 3018.5,1966.7C3021.8,1966.7 3025.0,1955.6 3028.3,1955.6C3031.8,1955.6 3035.4,1958.5 3038.9,1958.6C3042.4,1958.7 3045.8,1958.8 3049.3,1958.8C3053.0,1958.8 3056.7,1956.8 3060.4,1956.8C3064.1,1956.8 3067.8,1958.1 3071.5,1958.1C3074.8,1958.1 3078.0,1956.6 3081.3,1955.1C3085.0,1953.4 3088.7,1948.2 3092.4,1948.2C3096.1,1948.2 3099.8,1948.4 3103.5,1948.7C3106.8,1949.0 3110.1,1958.1 3113.4,1958.1C3116.9,1958.1 3120.5,1958.1 3124.0,1958.1C3127.9,1958.1 3131.7,1959.3 3135.6,1959.3C3138.9,1959.3 3142.1,1949.9 3145.4,1949.9C3148.9,1949.9 3152.3,1951.4 3155.8,1953.1C3159.3,1954.8 3162.9,1960.0 3166.4,1960.0C3170.1,1960.0 3173.8,1952.6 3177.5,1952.6C3181.2,1952.6 3184.9,1956.1 3188.6,1956.1C3192.1,1956.1 3195.7,1954.4 3199.2,1954.4C3202.6,1954.4 3206.1,1962.5 3209.5,1962.5C3213.0,1962.5 3216.4,1946.2 3219.9,1946.2C3223.4,1946.2 3227.0,1960.5 3230.5,1960.5C3234.2,1960.5 3237.9,1954.4 3241.6,1954.4C3244.9,1954.4 3248.2,1954.8 3251.5,1955.6C3255.2,1956.5 3258.9,1958.8 3262.6,1959.8C3266.1,1960.8 3269.7,1960.8 3273.2,1961.8C3276.6,1962.7 3280.1,1965.5 3283.5,1965.5C3287.2,1965.5 3290.9,1957.6 3294.6,1956.8C3298.1,1956.0 3301.7,1955.6 3305.2,1955.6C3308.7,1955.6 3312.1,1961.3 3315.6,1961.3C3319.3,1961.3 3323.0,1946.5 3326.7,1946.5C3330.0,1946.5 3333.2,1955.0 3336.5,1959.3L3336.5,2045L2287.4,2045Z" fill="url(#g5)"/><path d="M2287.4,1944.5C2291.1,1943.8 2294.8,1942.5 2298.5,1942.5C2302.0,1942.5 2305.6,1948.4 2309.1,1950.7C2312.5,1953.0 2316.0,1952.6 2319.4,1956.3C2322.7,1959.9 2326.0,2012.3 2329.3,2016.0C2333.0,2020.1 2336.7,2022.2 2340.4,2022.2C2343.9,2022.2 2347.3,1917.4 2350.8,1917.4C2354.2,1917.4 2357.5,1978.4 2360.9,1995.0C2364.5,2012.8 2368.1,2021.7 2371.7,2021.7C2375.2,2021.7 2378.8,1906.3 2382.3,1906.3C2385.6,1906.3 2388.9,1919.7 2392.2,1928.5C2395.9,1938.4 2399.6,1963.7 2403.3,1963.7C2407.0,1963.7 2410.7,1879.7 2414.4,1879.7C2417.7,1879.7 2420.9,1928.2 2424.2,1944.5C2427.9,1963.0 2431.6,1979.8 2435.3,1979.8C2438.6,1979.8 2441.9,1925.6 2445.2,1916.2C2449.1,1905.0 2453.1,1899.4 2457.0,1899.4C2460.5,1899.4 2463.9,2000.0 2467.4,2000.0C2470.9,2000.0 2474.5,1916.2 2478.0,1916.2C2481.4,1916.2 2484.9,1954.5 2488.3,1970.4C2491.8,1986.8 2495.4,2012.8 2498.9,2012.8C2502.4,2012.8 2505.8,1933.4 2509.3,1913.7C2513.0,1892.6 2516.7,1882.1 2520.4,1882.1C2523.7,1882.1 2526.9,1954.4 2530.2,1954.4C2533.9,1954.4 2537.6,1950.1 2541.3,1947.5C2544.8,1945.0 2548.4,1939.1 2551.9,1939.1C2555.4,1939.1 2558.8,1992.3 2562.3,1996.3C2565.8,2000.4 2569.4,2002.4 2572.9,2002.4C2576.4,2002.4 2579.8,1980.0 2583.3,1969.2C2586.7,1958.5 2590.2,1937.9 2593.6,1937.9C2597.4,1937.9 2601.2,1984.0 2605.0,1984.0C2608.4,1984.0 2611.9,1924.8 2615.3,1924.8C2619.0,1924.8 2622.7,1985.9 2626.4,1985.9C2630.1,1985.9 2633.8,1972.5 2637.5,1967.9C2641.0,1963.6 2644.4,1964.8 2647.9,1958.6C2651.0,1953.1 2654.1,1926.5 2657.2,1926.5C2661.2,1926.5 2665.1,1928.5 2669.1,1928.5C2672.5,1928.5 2676.0,1893.5 2679.4,1893.5C2682.9,1893.5 2686.3,1967.4 2689.8,1967.4C2693.5,1967.4 2697.2,1943.3 2700.9,1943.3C2704.4,1943.3 2708.0,1951.9 2711.5,1956.8C2715.0,1961.7 2718.6,1972.9 2722.1,1972.9C2725.5,1972.9 2729.0,1968.0 2732.4,1958.1C2735.9,1947.9 2739.5,1878.4 2743.0,1878.4C2746.5,1878.4 2749.9,1977.3 2753.4,1977.3C2757.1,1977.3 2760.8,1894.5 2764.5,1894.5C2767.9,1894.5 2771.4,1937.1 2774.8,1937.1C2778.3,1937.1 2781.9,1914.1 2785.4,1903.8C2788.9,1893.5 2792.5,1875.5 2796.0,1875.5C2799.7,1875.5 2803.4,1879.6 2807.1,1887.8C2811.4,1897.3 2815.7,1987.7 2820.0,1987.7C2825.9,1987.7 2831.9,1950.7 2837.8,1950.7C2841.6,1950.7 2845.3,1968.4 2849.1,1974.1C2852.5,1979.3 2856.0,1982.2 2859.4,1984.7C2863.1,1987.3 2866.8,1988.9 2870.5,1988.9C2873.8,1988.9 2877.1,1975.2 2880.4,1970.4C2884.1,1965.0 2887.8,1962.6 2891.5,1959.3C2894.8,1956.3 2898.1,1951.2 2901.4,1951.2C2905.1,1951.2 2908.8,1959.3 2912.5,1959.3C2916.0,1959.3 2919.6,1901.4 2923.1,1901.4C2926.5,1901.4 2930.0,1928.0 2933.4,1937.1C2936.7,1945.9 2940.0,1955.6 2943.3,1955.6C2947.2,1955.6 2951.2,1953.1 2955.1,1953.1C2958.6,1953.1 2962.0,1964.2 2965.5,1964.2C2968.8,1964.2 2972.0,1953.0 2975.3,1952.6C2979.4,1952.1 2983.6,1951.9 2987.7,1951.9C2991.0,1951.9 2994.2,1954.4 2997.5,1955.1C3001.0,1955.9 3004.6,1955.5 3008.1,1956.3C3011.6,1957.1 3015.0,1966.7 3018.5,1966.7C3021.8,1966.7 3025.0,1955.6 3028.3,1955.6C3031.8,1955.6 3035.4,1958.5 3038.9,1958.6C3042.4,1958.7 3045.8,1958.8 3049.3,1958.8C3053.0,1958.8 3056.7,1956.8 3060.4,1956.8C3064.1,1956.8 3067.8,1958.1 3071.5,1958.1C3074.8,1958.1 3078.0,1956.6 3081.3,1955.1C3085.0,1953.4 3088.7,1948.2 3092.4,1948.2C3096.1,1948.2 3099.8,1948.4 3103.5,1948.7C3106.8,1949.0 3110.1,1958.1 3113.4,1958.1C3116.9,1958.1 3120.5,1958.1 3124.0,1958.1C3127.9,1958.1 3131.7,1959.3 3135.6,1959.3C3138.9,1959.3 3142.1,1949.9 3145.4,1949.9C3148.9,1949.9 3152.3,1951.4 3155.8,1953.1C3159.3,1954.8 3162.9,1960.0 3166.4,1960.0C3170.1,1960.0 3173.8,1952.6 3177.5,1952.6C3181.2,1952.6 3184.9,1956.1 3188.6,1956.1C3192.1,1956.1 3195.7,1954.4 3199.2,1954.4C3202.6,1954.4 3206.1,1962.5 3209.5,1962.5C3213.0,1962.5 3216.4,1946.2 3219.9,1946.2C3223.4,1946.2 3227.0,1960.5 3230.5,1960.5C3234.2,1960.5 3237.9,1954.4 3241.6,1954.4C3244.9,1954.4 3248.2,1954.8 3251.5,1955.6C3255.2,1956.5 3258.9,1958.8 3262.6,1959.8C3266.1,1960.8 3269.7,1960.8 3273.2,1961.8C3276.6,1962.7 3280.1,1965.5 3283.5,1965.5C3287.2,1965.5 3290.9,1957.6 3294.6,1956.8C3298.1,1956.0 3301.7,1955.6 3305.2,1955.6C3308.7,1955.6 3312.1,1961.3 3315.6,1961.3C3319.3,1961.3 3323.0,1946.5 3326.7,1946.5C3330.0,1946.5 3333.2,1955.0 3336.5,1959.3" fill="none" stroke="#5189e8" stroke-width="4" stroke-linejoin="round" stroke-linecap="butt"/></svg>
<div style="position:absolute;left:1117px;top:2150px;width:1114px;height:516px;background:#7e3b3a;border-radius:30px"></div>
<div style="position:absolute;left:1121px;top:2154px;width:1106px;height:508px;background:#181818;border:2px solid #303030;border-radius:26px;box-sizing:border-box"></div>
<div style="position:absolute;left:1171px;top:2214px;width:24px;height:24px;background:#4aa458;border-radius:50%"></div>
<div style="position:absolute;left:1212.0px;top:2212.4px;white-space:nowrap;font-family:'Liberation Sans', sans-serif;font-size:29px;line-height:29px;font-weight:400;color:#fafafa;letter-spacing:0.50px;">Rpm</div>
<div style="position:absolute;left:1985px;top:2204px;width:192px;height:44px;border:2px solid #333;border-radius:22px;box-sizing:border-box"></div>
<div style="position:absolute;left:2003.0px;top:2214.1px;white-space:nowrap;font-family:'Liberation Mono', monospace;font-size:26px;line-height:26px;font-weight:400;color:#fafafa;letter-spacing:-1.35px;">1666.56 RPM</div>
<div style="position:absolute;left:1871px;top:2204px;width:98px;height:44px;background:#7a3c3b;border-radius:22px"></div>
<div style="position:absolute;left:1890.0px;top:2213.8px;white-space:nowrap;font-family:'Liberation Sans', sans-serif;font-size:25px;line-height:25px;font-weight:400;color:#d9c9c9;letter-spacing:0.33px;">spike</div>
<div style="position:absolute;left:1172.0px;top:2268.0px;white-space:nowrap;font-family:'Liberation Sans', sans-serif;font-size:26px;line-height:26px;font-weight:400;color:#9e9e9e;letter-spacing:-0.26px;">Quality: 65%</div>
<div style="position:absolute;left:1335px;top:2280px;width:5px;height:5px;background:#9e9e9e;border-radius:50%"></div>
<div style="position:absolute;left:1359.0px;top:2268.0px;white-space:nowrap;font-family:'Liberation Sans', sans-serif;font-size:26px;line-height:26px;font-weight:400;color:#9e9e9e;letter-spacing:-0.24px;">Range: 0 - 3000 RPM</div>
<svg style="position:absolute;left:0;top:0;overflow:visible" width="1" height="1"><defs><linearGradient id="g6" x1="0" y1="2414.7" x2="0" y2="2585" gradientUnits="userSpaceOnUse"><stop offset="0" stop-color="#5cc466" stop-opacity="0.25"/><stop offset="1" stop-color="#5cc466" stop-opacity="0.03"/></linearGradient></defs><path d="M1149,2507 L2199,2507" stroke="#4a4a4a" stroke-width="2.2" stroke-dasharray="6 6"/><path d="M1149.1,2429.0C1152.6,2468.5 1156.2,2547.4 1159.7,2547.4C1163.0,2547.4 1166.3,2437.0 1169.6,2434.0C1173.3,2430.7 1177.0,2429.0 1180.7,2429.0C1184.2,2429.0 1187.8,2548.6 1191.3,2548.6C1194.9,2548.6 1198.5,2427.8 1202.1,2427.8C1205.6,2427.8 1209.2,2542.4 1212.7,2542.4C1216.2,2542.4 1219.8,2427.7 1223.3,2427.1C1226.9,2426.4 1230.6,2426.1 1234.2,2426.1C1237.5,2426.1 1240.7,2551.8 1244.0,2551.8C1247.5,2551.8 1251.1,2543.7 1254.6,2543.7C1258.3,2543.7 1262.0,2544.4 1265.7,2544.4C1269.2,2544.4 1272.8,2443.8 1276.3,2443.8C1279.8,2443.8 1283.2,2544.9 1286.7,2544.9C1290.2,2544.9 1293.8,2428.5 1297.3,2428.5C1300.9,2428.5 1304.5,2542.9 1308.1,2542.9C1311.4,2542.9 1314.7,2421.6 1318.0,2421.6C1321.8,2421.6 1325.5,2429.8 1329.3,2429.8C1332.9,2429.8 1336.6,2427.2 1340.2,2424.6C1343.7,2422.1 1347.3,2414.7 1350.8,2414.7C1354.1,2414.7 1357.4,2540.2 1360.7,2541.2C1364.4,2542.3 1368.1,2542.0 1371.8,2542.9C1375.2,2543.7 1378.7,2546.1 1382.1,2546.1C1385.6,2546.1 1389.2,2422.9 1392.7,2422.9C1396.2,2422.9 1399.8,2542.0 1403.3,2542.0C1406.9,2542.0 1410.6,2426.1 1414.2,2426.1C1417.7,2426.1 1421.3,2546.1 1424.8,2546.1C1428.3,2546.1 1431.9,2426.6 1435.4,2426.6C1438.8,2426.6 1442.3,2539.5 1445.7,2539.5C1449.4,2539.5 1453.1,2426.1 1456.8,2426.1C1460.3,2426.1 1463.9,2542.0 1467.4,2542.0C1470.9,2542.0 1474.3,2425.3 1477.8,2425.3C1481.5,2425.3 1485.2,2532.6 1488.9,2539.5C1492.6,2546.4 1496.3,2549.8 1500.0,2549.8C1503.3,2549.8 1506.5,2545.7 1509.8,2537.5C1513.3,2528.8 1516.7,2427.8 1520.2,2427.8C1523.7,2427.8 1527.3,2540.7 1530.8,2540.7C1534.3,2540.7 1537.9,2422.9 1541.4,2422.9C1545.0,2422.9 1548.6,2542.4 1552.2,2542.4C1555.7,2542.4 1559.3,2420.4 1562.8,2420.4C1566.1,2420.4 1569.4,2540.7 1572.7,2540.7C1576.4,2540.7 1580.1,2539.0 1583.8,2538.7C1587.2,2538.4 1590.7,2538.6 1594.1,2538.3C1597.6,2538.0 1601.2,2423.6 1604.7,2423.6C1608.2,2423.6 1611.8,2543.2 1615.3,2543.2C1618.8,2543.2 1622.2,2542.8 1625.7,2542.0C1629.2,2541.2 1632.6,2424.6 1636.1,2424.6C1640.0,2424.6 1644.0,2424.8 1647.9,2425.3C1651.2,2425.7 1654.5,2548.6 1657.8,2548.6C1661.5,2548.6 1665.1,2547.4 1668.8,2544.9C1672.5,2542.4 1676.3,2420.4 1680.0,2420.4C1683.3,2420.4 1686.6,2535.0 1689.9,2535.0C1693.6,2535.0 1697.3,2429.5 1701.0,2429.5C1704.3,2429.5 1707.5,2534.8 1710.8,2538.7C1714.5,2543.2 1718.2,2545.4 1721.9,2545.4C1725.4,2545.4 1729.0,2539.5 1732.5,2539.5C1736.0,2539.5 1739.4,2541.1 1742.9,2542.9C1746.4,2544.7 1750.0,2550.3 1753.5,2550.3C1756.9,2550.3 1760.4,2546.7 1763.8,2539.5C1767.5,2531.7 1771.2,2423.6 1774.9,2423.6C1778.4,2423.6 1782.0,2541.2 1785.5,2541.2C1789.0,2541.2 1792.4,2419.9 1795.9,2419.9C1799.3,2419.9 1802.8,2553.5 1806.2,2553.5C1809.7,2553.5 1813.3,2429.8 1816.8,2429.8C1820.5,2429.8 1824.2,2543.7 1827.9,2543.7C1831.4,2543.7 1834.8,2425.3 1838.3,2425.3C1841.8,2425.3 1845.4,2544.4 1848.9,2544.4C1852.4,2544.4 1856.0,2432.0 1859.5,2432.0C1862.9,2432.0 1866.4,2544.4 1869.8,2544.4C1873.5,2544.4 1877.2,2543.9 1880.9,2542.9C1884.4,2541.9 1888.0,2424.1 1891.5,2424.1C1895.0,2424.1 1898.4,2543.7 1901.9,2543.7C1905.2,2543.7 1908.5,2427.8 1911.8,2427.8C1915.7,2427.8 1919.7,2429.2 1923.6,2432.0C1927.0,2434.4 1930.5,2548.6 1933.9,2548.6C1937.2,2548.6 1940.5,2443.6 1943.8,2434.0C1947.5,2423.3 1951.2,2417.9 1954.9,2417.9C1958.4,2417.9 1962.0,2549.8 1965.5,2549.8C1969.0,2549.8 1972.4,2431.5 1975.9,2431.5C1979.6,2431.5 1983.3,2536.7 1987.0,2541.2C1990.7,2545.7 1994.3,2547.9 1998.0,2547.9C2001.5,2547.9 2004.9,2546.1 2008.4,2542.4C2011.5,2539.1 2014.7,2435.4 2017.8,2434.0C2021.5,2432.3 2025.2,2431.5 2028.9,2431.5C2032.8,2431.5 2036.6,2432.3 2040.5,2434.0C2043.6,2435.3 2046.7,2536.4 2049.8,2543.7C2053.5,2552.4 2057.2,2556.7 2060.9,2556.7C2064.6,2556.7 2068.3,2553.0 2072.0,2551.8C2075.7,2550.7 2079.4,2549.8 2083.1,2549.8C2086.4,2549.8 2089.7,2555.3 2093.0,2555.3C2096.3,2555.3 2099.5,2440.6 2102.8,2437.7C2106.5,2434.4 2110.2,2433.2 2113.9,2432.7C2117.6,2432.2 2121.3,2432.0 2125.0,2432.0C2128.5,2432.0 2132.1,2551.8 2135.6,2551.8C2139.1,2551.8 2142.5,2431.0 2146.0,2431.0C2149.7,2431.0 2153.4,2433.9 2157.1,2435.2C2160.6,2436.4 2164.2,2436.3 2167.7,2438.4C2171.1,2440.5 2174.6,2553.5 2178.0,2553.5C2181.5,2553.5 2184.9,2442.2 2188.4,2441.9C2191.9,2441.6 2195.5,2441.6 2199.0,2441.4L2199.0,2585L1149.1,2585Z" fill="url(#g6)"/><path d="M1149.1,2429.0C1152.6,2468.5 1156.2,2547.4 1159.7,2547.4C1163.0,2547.4 1166.3,2437.0 1169.6,2434.0C1173.3,2430.7 1177.0,2429.0 1180.7,2429.0C1184.2,2429.0 1187.8,2548.6 1191.3,2548.6C1194.9,2548.6 1198.5,2427.8 1202.1,2427.8C1205.6,2427.8 1209.2,2542.4 1212.7,2542.4C1216.2,2542.4 1219.8,2427.7 1223.3,2427.1C1226.9,2426.4 1230.6,2426.1 1234.2,2426.1C1237.5,2426.1 1240.7,2551.8 1244.0,2551.8C1247.5,2551.8 1251.1,2543.7 1254.6,2543.7C1258.3,2543.7 1262.0,2544.4 1265.7,2544.4C1269.2,2544.4 1272.8,2443.8 1276.3,2443.8C1279.8,2443.8 1283.2,2544.9 1286.7,2544.9C1290.2,2544.9 1293.8,2428.5 1297.3,2428.5C1300.9,2428.5 1304.5,2542.9 1308.1,2542.9C1311.4,2542.9 1314.7,2421.6 1318.0,2421.6C1321.8,2421.6 1325.5,2429.8 1329.3,2429.8C1332.9,2429.8 1336.6,2427.2 1340.2,2424.6C1343.7,2422.1 1347.3,2414.7 1350.8,2414.7C1354.1,2414.7 1357.4,2540.2 1360.7,2541.2C1364.4,2542.3 1368.1,2542.0 1371.8,2542.9C1375.2,2543.7 1378.7,2546.1 1382.1,2546.1C1385.6,2546.1 1389.2,2422.9 1392.7,2422.9C1396.2,2422.9 1399.8,2542.0 1403.3,2542.0C1406.9,2542.0 1410.6,2426.1 1414.2,2426.1C1417.7,2426.1 1421.3,2546.1 1424.8,2546.1C1428.3,2546.1 1431.9,2426.6 1435.4,2426.6C1438.8,2426.6 1442.3,2539.5 1445.7,2539.5C1449.4,2539.5 1453.1,2426.1 1456.8,2426.1C1460.3,2426.1 1463.9,2542.0 1467.4,2542.0C1470.9,2542.0 1474.3,2425.3 1477.8,2425.3C1481.5,2425.3 1485.2,2532.6 1488.9,2539.5C1492.6,2546.4 1496.3,2549.8 1500.0,2549.8C1503.3,2549.8 1506.5,2545.7 1509.8,2537.5C1513.3,2528.8 1516.7,2427.8 1520.2,2427.8C1523.7,2427.8 1527.3,2540.7 1530.8,2540.7C1534.3,2540.7 1537.9,2422.9 1541.4,2422.9C1545.0,2422.9 1548.6,2542.4 1552.2,2542.4C1555.7,2542.4 1559.3,2420.4 1562.8,2420.4C1566.1,2420.4 1569.4,2540.7 1572.7,2540.7C1576.4,2540.7 1580.1,2539.0 1583.8,2538.7C1587.2,2538.4 1590.7,2538.6 1594.1,2538.3C1597.6,2538.0 1601.2,2423.6 1604.7,2423.6C1608.2,2423.6 1611.8,2543.2 1615.3,2543.2C1618.8,2543.2 1622.2,2542.8 1625.7,2542.0C1629.2,2541.2 1632.6,2424.6 1636.1,2424.6C1640.0,2424.6 1644.0,2424.8 1647.9,2425.3C1651.2,2425.7 1654.5,2548.6 1657.8,2548.6C1661.5,2548.6 1665.1,2547.4 1668.8,2544.9C1672.5,2542.4 1676.3,2420.4 1680.0,2420.4C1683.3,2420.4 1686.6,2535.0 1689.9,2535.0C1693.6,2535.0 1697.3,2429.5 1701.0,2429.5C1704.3,2429.5 1707.5,2534.8 1710.8,2538.7C1714.5,2543.2 1718.2,2545.4 1721.9,2545.4C1725.4,2545.4 1729.0,2539.5 1732.5,2539.5C1736.0,2539.5 1739.4,2541.1 1742.9,2542.9C1746.4,2544.7 1750.0,2550.3 1753.5,2550.3C1756.9,2550.3 1760.4,2546.7 1763.8,2539.5C1767.5,2531.7 1771.2,2423.6 1774.9,2423.6C1778.4,2423.6 1782.0,2541.2 1785.5,2541.2C1789.0,2541.2 1792.4,2419.9 1795.9,2419.9C1799.3,2419.9 1802.8,2553.5 1806.2,2553.5C1809.7,2553.5 1813.3,2429.8 1816.8,2429.8C1820.5,2429.8 1824.2,2543.7 1827.9,2543.7C1831.4,2543.7 1834.8,2425.3 1838.3,2425.3C1841.8,2425.3 1845.4,2544.4 1848.9,2544.4C1852.4,2544.4 1856.0,2432.0 1859.5,2432.0C1862.9,2432.0 1866.4,2544.4 1869.8,2544.4C1873.5,2544.4 1877.2,2543.9 1880.9,2542.9C1884.4,2541.9 1888.0,2424.1 1891.5,2424.1C1895.0,2424.1 1898.4,2543.7 1901.9,2543.7C1905.2,2543.7 1908.5,2427.8 1911.8,2427.8C1915.7,2427.8 1919.7,2429.2 1923.6,2432.0C1927.0,2434.4 1930.5,2548.6 1933.9,2548.6C1937.2,2548.6 1940.5,2443.6 1943.8,2434.0C1947.5,2423.3 1951.2,2417.9 1954.9,2417.9C1958.4,2417.9 1962.0,2549.8 1965.5,2549.8C1969.0,2549.8 1972.4,2431.5 1975.9,2431.5C1979.6,2431.5 1983.3,2536.7 1987.0,2541.2C1990.7,2545.7 1994.3,2547.9 1998.0,2547.9C2001.5,2547.9 2004.9,2546.1 2008.4,2542.4C2011.5,2539.1 2014.7,2435.4 2017.8,2434.0C2021.5,2432.3 2025.2,2431.5 2028.9,2431.5C2032.8,2431.5 2036.6,2432.3 2040.5,2434.0C2043.6,2435.3 2046.7,2536.4 2049.8,2543.7C2053.5,2552.4 2057.2,2556.7 2060.9,2556.7C2064.6,2556.7 2068.3,2553.0 2072.0,2551.8C2075.7,2550.7 2079.4,2549.8 2083.1,2549.8C2086.4,2549.8 2089.7,2555.3 2093.0,2555.3C2096.3,2555.3 2099.5,2440.6 2102.8,2437.7C2106.5,2434.4 2110.2,2433.2 2113.9,2432.7C2117.6,2432.2 2121.3,2432.0 2125.0,2432.0C2128.5,2432.0 2132.1,2551.8 2135.6,2551.8C2139.1,2551.8 2142.5,2431.0 2146.0,2431.0C2149.7,2431.0 2153.4,2433.9 2157.1,2435.2C2160.6,2436.4 2164.2,2436.3 2167.7,2438.4C2171.1,2440.5 2174.6,2553.5 2178.0,2553.5C2181.5,2553.5 2184.9,2442.2 2188.4,2441.9C2191.9,2441.6 2195.5,2441.6 2199.0,2441.4" fill="none" stroke="#5cc466" stroke-width="4" stroke-linejoin="round" stroke-linecap="butt"/></svg>
<div style="position:absolute;left:2259px;top:2154px;width:1106px;height:508px;background:#181818;border:2px solid #303030;border-radius:26px;box-sizing:border-box"></div>
<div style="position:absolute;left:2309px;top:2214px;width:24px;height:24px;background:#c9803a;border-radius:50%"></div>
<div style="position:absolute;left:2350.0px;top:2212.4px;white-space:nowrap;font-family:'Liberation Sans', sans-serif;font-size:29px;line-height:29px;font-weight:400;color:#fafafa;letter-spacing:0.40px;">Power</div>
<div style="position:absolute;left:3165px;top:2204px;width:150px;height:44px;border:2px solid #333;border-radius:22px;box-sizing:border-box"></div>
<div style="position:absolute;left:3183.0px;top:2214.1px;white-space:nowrap;font-family:'Liberation Mono', monospace;font-size:26px;line-height:26px;font-weight:400;color:#fafafa;letter-spacing:-1.35px;">90.27 kW</div>
<div style="position:absolute;left:2310.0px;top:2268.0px;white-space:nowrap;font-family:'Liberation Sans', sans-serif;font-size:26px;line-height:26px;font-weight:400;color:#9e9e9e;letter-spacing:-0.26px;">Quality: 86%</div>
<div style="position:absolute;left:2473px;top:2280px;width:5px;height:5px;background:#9e9e9e;border-radius:50%"></div>
<div style="position:absolute;left:2497.0px;top:2268.0px;white-space:nowrap;font-family:'Liberation Sans', sans-serif;font-size:26px;line-height:26px;font-weight:400;color:#9e9e9e;letter-spacing:-0.23px;">Range: 0 - 150 kW</div>
<svg style="position:absolute;left:0;top:0;overflow:visible" width="1" height="1"><defs><linearGradient id="g7" x1="0" y1="2414.2" x2="0" y2="2585" gradientUnits="userSpaceOnUse"><stop offset="0" stop-color="#f0993e" stop-opacity="0.25"/><stop offset="1" stop-color="#f0993e" stop-opacity="0.03"/></linearGradient></defs><path d="M2287,2459 L3337,2459" stroke="#4a4a4a" stroke-width="2.2" stroke-dasharray="6 6"/><path d="M2286.9,2496.3C2290.4,2501.0 2293.8,2505.8 2297.3,2510.4C2301.0,2515.3 2304.7,2524.7 2308.4,2524.7C2311.8,2524.7 2315.3,2511.6 2318.7,2511.6C2322.2,2511.6 2325.8,2555.5 2329.3,2555.5C2332.8,2555.5 2336.4,2542.5 2339.9,2542.0C2343.4,2541.5 2346.8,2541.5 2350.3,2541.2C2353.8,2540.9 2357.4,2540.0 2360.9,2540.0C2364.5,2540.0 2368.1,2557.2 2371.7,2557.2C2375.2,2557.2 2378.8,2530.6 2382.3,2530.6C2385.8,2530.6 2389.4,2533.1 2392.9,2533.8C2396.5,2534.6 2400.2,2534.2 2403.8,2535.0C2407.1,2535.7 2410.3,2540.7 2413.6,2543.7C2417.1,2546.9 2420.7,2553.5 2424.2,2553.5C2427.9,2553.5 2431.6,2553.5 2435.3,2553.5C2438.8,2553.5 2442.4,2504.2 2445.9,2504.2C2449.4,2504.2 2452.8,2553.0 2456.3,2553.0C2459.8,2553.0 2463.4,2535.5 2466.9,2535.5C2470.3,2535.5 2473.8,2550.3 2477.2,2550.3C2480.7,2550.3 2484.3,2549.5 2487.8,2547.9C2491.3,2546.3 2494.7,2541.8 2498.2,2539.5C2501.9,2537.0 2505.6,2537.5 2509.3,2533.8C2513.0,2530.1 2516.7,2517.1 2520.4,2517.1C2523.9,2517.1 2527.5,2531.0 2531.0,2535.0C2534.4,2538.9 2537.9,2541.2 2541.3,2541.2C2544.6,2541.2 2547.9,2528.9 2551.2,2525.2C2554.7,2521.2 2558.3,2520.5 2561.8,2519.0C2565.5,2517.4 2569.2,2517.6 2572.9,2516.1C2576.4,2514.7 2579.8,2511.2 2583.3,2510.4C2586.8,2509.6 2590.4,2509.2 2593.9,2509.2C2597.1,2509.2 2600.3,2538.0 2603.5,2543.7C2607.4,2550.8 2611.4,2554.3 2615.3,2554.3C2618.8,2554.3 2622.2,2536.8 2625.7,2536.8C2629.5,2536.8 2633.2,2543.2 2637.0,2543.2C2640.3,2543.2 2643.6,2490.9 2646.9,2489.4C2650.3,2487.8 2653.8,2488.0 2657.2,2487.0C2660.9,2485.9 2664.6,2482.8 2668.3,2482.8C2672.0,2482.8 2675.7,2494.4 2679.4,2494.4C2682.7,2494.4 2686.0,2487.5 2689.3,2487.5C2693.0,2487.5 2696.7,2490.7 2700.4,2490.7C2703.7,2490.7 2706.9,2486.3 2710.2,2484.5C2713.9,2482.5 2717.6,2481.4 2721.3,2479.6C2725.0,2477.8 2728.7,2473.9 2732.4,2473.9C2735.7,2473.9 2739.0,2480.1 2742.3,2480.1C2746.0,2480.1 2749.7,2471.4 2753.4,2471.4C2756.8,2471.4 2760.3,2490.2 2763.7,2490.2C2767.2,2490.2 2770.8,2481.2 2774.3,2479.6C2778.0,2477.9 2781.7,2477.1 2785.4,2477.1C2788.7,2477.1 2792.0,2487.0 2795.3,2487.0C2798.8,2487.0 2802.4,2466.5 2805.9,2466.5C2809.3,2466.5 2812.8,2473.4 2816.2,2473.4C2817.5,2473.4 2818.7,2473.4 2820.0,2473.4C2822.9,2473.4 2825.7,2463.6 2828.6,2463.6C2832.1,2463.6 2835.7,2473.9 2839.2,2473.9C2842.7,2473.9 2846.1,2463.6 2849.6,2463.6C2853.1,2463.6 2856.7,2472.2 2860.2,2472.2C2863.6,2472.2 2867.1,2466.5 2870.5,2464.8C2874.0,2463.0 2877.6,2463.0 2881.1,2461.8C2884.6,2460.6 2888.0,2458.5 2891.5,2457.4C2895.0,2456.2 2898.6,2454.9 2902.1,2454.9C2905.6,2454.9 2909.0,2460.4 2912.5,2461.6C2916.2,2462.9 2919.9,2462.3 2923.6,2463.6C2927.0,2464.8 2930.5,2470.9 2933.9,2470.9C2937.4,2470.9 2941.0,2452.8 2944.5,2450.7C2948.0,2448.6 2951.6,2447.5 2955.1,2447.5C2958.7,2447.5 2962.4,2459.9 2966.0,2459.9C2969.5,2459.9 2973.1,2456.4 2976.6,2454.9C2980.1,2453.4 2983.7,2451.9 2987.2,2450.7C2990.6,2449.5 2994.1,2447.5 2997.5,2447.5C3001.0,2447.5 3004.4,2449.6 3007.9,2451.2C3011.4,2452.9 3015.0,2457.4 3018.5,2457.4C3022.0,2457.4 3025.6,2446.3 3029.1,2446.3C3032.5,2446.3 3036.0,2451.5 3039.4,2454.9C3043.1,2458.6 3046.8,2468.0 3050.5,2468.0C3054.0,2468.0 3057.6,2434.0 3061.1,2434.0C3064.6,2434.0 3068.0,2451.2 3071.5,2451.2C3075.2,2451.2 3078.9,2443.8 3082.6,2443.8C3086.1,2443.8 3089.7,2448.3 3093.2,2448.3C3096.8,2448.3 3100.4,2444.8 3104.0,2443.3C3107.5,2441.8 3111.1,2439.4 3114.6,2439.4C3118.1,2439.4 3121.7,2448.8 3125.2,2448.8C3128.7,2448.8 3132.1,2444.3 3135.6,2444.3C3139.0,2444.3 3142.5,2455.7 3145.9,2455.7C3149.2,2455.7 3152.5,2441.4 3155.8,2441.4C3159.6,2441.4 3163.3,2447.5 3167.1,2447.5C3170.6,2447.5 3174.0,2425.3 3177.5,2425.3C3181.0,2425.3 3184.4,2427.5 3187.9,2429.5C3191.7,2431.7 3195.4,2438.4 3199.2,2438.4C3202.6,2438.4 3206.1,2432.0 3209.5,2432.0C3213.2,2432.0 3216.9,2432.0 3220.6,2432.0C3224.1,2432.0 3227.7,2432.4 3231.2,2433.2C3234.8,2434.0 3238.5,2438.4 3242.1,2438.4C3245.4,2438.4 3248.7,2436.8 3252.0,2433.5C3255.5,2430.0 3259.1,2414.2 3262.6,2414.2C3266.3,2414.2 3269.9,2415.2 3273.6,2417.2C3277.1,2419.1 3280.5,2440.1 3284.0,2440.1C3287.5,2440.1 3291.1,2427.1 3294.6,2427.1C3298.1,2427.1 3301.7,2432.7 3305.2,2433.2C3308.7,2433.7 3312.1,2434.0 3315.6,2434.0C3319.0,2434.0 3322.5,2425.6 3325.9,2422.9C3329.4,2420.1 3333.0,2419.6 3336.5,2417.9L3336.5,2585L2286.9,2585Z" fill="url(#g7)"/><path d="M2286.9,2496.3C2290.4,2501.0 2293.8,2505.8 2297.3,2510.4C2301.0,2515.3 2304.7,2524.7 2308.4,2524.7C2311.8,2524.7 2315.3,2511.6 2318.7,2511.6C2322.2,2511.6 2325.8,2555.5 2329.3,2555.5C2332.8,2555.5 2336.4,2542.5 2339.9,2542.0C2343.4,2541.5 2346.8,2541.5 2350.3,2541.2C2353.8,2540.9 2357.4,2540.0 2360.9,2540.0C2364.5,2540.0 2368.1,2557.2 2371.7,2557.2C2375.2,2557.2 2378.8,2530.6 2382.3,2530.6C2385.8,2530.6 2389.4,2533.1 2392.9,2533.8C2396.5,2534.6 2400.2,2534.2 2403.8,2535.0C2407.1,2535.7 2410.3,2540.7 2413.6,2543.7C2417.1,2546.9 2420.7,2553.5 2424.2,2553.5C2427.9,2553.5 2431.6,2553.5 2435.3,2553.5C2438.8,2553.5 2442.4,2504.2 2445.9,2504.2C2449.4,2504.2 2452.8,2553.0 2456.3,2553.0C2459.8,2553.0 2463.4,2535.5 2466.9,2535.5C2470.3,2535.5 2473.8,2550.3 2477.2,2550.3C2480.7,2550.3 2484.3,2549.5 2487.8,2547.9C2491.3,2546.3 2494.7,2541.8 2498.2,2539.5C2501.9,2537.0 2505.6,2537.5 2509.3,2533.8C2513.0,2530.1 2516.7,2517.1 2520.4,2517.1C2523.9,2517.1 2527.5,2531.0 2531.0,2535.0C2534.4,2538.9 2537.9,2541.2 2541.3,2541.2C2544.6,2541.2 2547.9,2528.9 2551.2,2525.2C2554.7,2521.2 2558.3,2520.5 2561.8,2519.0C2565.5,2517.4 2569.2,2517.6 2572.9,2516.1C2576.4,2514.7 2579.8,2511.2 2583.3,2510.4C2586.8,2509.6 2590.4,2509.2 2593.9,2509.2C2597.1,2509.2 2600.3,2538.0 2603.5,2543.7C2607.4,2550.8 2611.4,2554.3 2615.3,2554.3C2618.8,2554.3 2622.2,2536.8 2625.7,2536.8C2629.5,2536.8 2633.2,2543.2 2637.0,2543.2C2640.3,2543.2 2643.6,2490.9 2646.9,2489.4C2650.3,2487.8 2653.8,2488.0 2657.2,2487.0C2660.9,2485.9 2664.6,2482.8 2668.3,2482.8C2672.0,2482.8 2675.7,2494.4 2679.4,2494.4C2682.7,2494.4 2686.0,2487.5 2689.3,2487.5C2693.0,2487.5 2696.7,2490.7 2700.4,2490.7C2703.7,2490.7 2706.9,2486.3 2710.2,2484.5C2713.9,2482.5 2717.6,2481.4 2721.3,2479.6C2725.0,2477.8 2728.7,2473.9 2732.4,2473.9C2735.7,2473.9 2739.0,2480.1 2742.3,2480.1C2746.0,2480.1 2749.7,2471.4 2753.4,2471.4C2756.8,2471.4 2760.3,2490.2 2763.7,2490.2C2767.2,2490.2 2770.8,2481.2 2774.3,2479.6C2778.0,2477.9 2781.7,2477.1 2785.4,2477.1C2788.7,2477.1 2792.0,2487.0 2795.3,2487.0C2798.8,2487.0 2802.4,2466.5 2805.9,2466.5C2809.3,2466.5 2812.8,2473.4 2816.2,2473.4C2817.5,2473.4 2818.7,2473.4 2820.0,2473.4C2822.9,2473.4 2825.7,2463.6 2828.6,2463.6C2832.1,2463.6 2835.7,2473.9 2839.2,2473.9C2842.7,2473.9 2846.1,2463.6 2849.6,2463.6C2853.1,2463.6 2856.7,2472.2 2860.2,2472.2C2863.6,2472.2 2867.1,2466.5 2870.5,2464.8C2874.0,2463.0 2877.6,2463.0 2881.1,2461.8C2884.6,2460.6 2888.0,2458.5 2891.5,2457.4C2895.0,2456.2 2898.6,2454.9 2902.1,2454.9C2905.6,2454.9 2909.0,2460.4 2912.5,2461.6C2916.2,2462.9 2919.9,2462.3 2923.6,2463.6C2927.0,2464.8 2930.5,2470.9 2933.9,2470.9C2937.4,2470.9 2941.0,2452.8 2944.5,2450.7C2948.0,2448.6 2951.6,2447.5 2955.1,2447.5C2958.7,2447.5 2962.4,2459.9 2966.0,2459.9C2969.5,2459.9 2973.1,2456.4 2976.6,2454.9C2980.1,2453.4 2983.7,2451.9 2987.2,2450.7C2990.6,2449.5 2994.1,2447.5 2997.5,2447.5C3001.0,2447.5 3004.4,2449.6 3007.9,2451.2C3011.4,2452.9 3015.0,2457.4 3018.5,2457.4C3022.0,2457.4 3025.6,2446.3 3029.1,2446.3C3032.5,2446.3 3036.0,2451.5 3039.4,2454.9C3043.1,2458.6 3046.8,2468.0 3050.5,2468.0C3054.0,2468.0 3057.6,2434.0 3061.1,2434.0C3064.6,2434.0 3068.0,2451.2 3071.5,2451.2C3075.2,2451.2 3078.9,2443.8 3082.6,2443.8C3086.1,2443.8 3089.7,2448.3 3093.2,2448.3C3096.8,2448.3 3100.4,2444.8 3104.0,2443.3C3107.5,2441.8 3111.1,2439.4 3114.6,2439.4C3118.1,2439.4 3121.7,2448.8 3125.2,2448.8C3128.7,2448.8 3132.1,2444.3 3135.6,2444.3C3139.0,2444.3 3142.5,2455.7 3145.9,2455.7C3149.2,2455.7 3152.5,2441.4 3155.8,2441.4C3159.6,2441.4 3163.3,2447.5 3167.1,2447.5C3170.6,2447.5 3174.0,2425.3 3177.5,2425.3C3181.0,2425.3 3184.4,2427.5 3187.9,2429.5C3191.7,2431.7 3195.4,2438.4 3199.2,2438.4C3202.6,2438.4 3206.1,2432.0 3209.5,2432.0C3213.2,2432.0 3216.9,2432.0 3220.6,2432.0C3224.1,2432.0 3227.7,2432.4 3231.2,2433.2C3234.8,2434.0 3238.5,2438.4 3242.1,2438.4C3245.4,2438.4 3248.7,2436.8 3252.0,2433.5C3255.5,2430.0 3259.1,2414.2 3262.6,2414.2C3266.3,2414.2 3269.9,2415.2 3273.6,2417.2C3277.1,2419.1 3280.5,2440.1 3284.0,2440.1C3287.5,2440.1 3291.1,2427.1 3294.6,2427.1C3298.1,2427.1 3301.7,2432.7 3305.2,2433.2C3308.7,2433.7 3312.1,2434.0 3315.6,2434.0C3319.0,2434.0 3322.5,2425.6 3325.9,2422.9C3329.4,2420.1 3333.0,2419.6 3336.5,2417.9" fill="none" stroke="#f0993e" stroke-width="4" stroke-linejoin="round" stroke-linecap="butt"/></svg><div style='position:absolute;left:112px;top:250px;width:3498px;height:2458px;border:2px solid #2e2e2e;border-top:none;border-radius:0 0 20px 20px;box-sizing:border-box'></div></div></body></html>
